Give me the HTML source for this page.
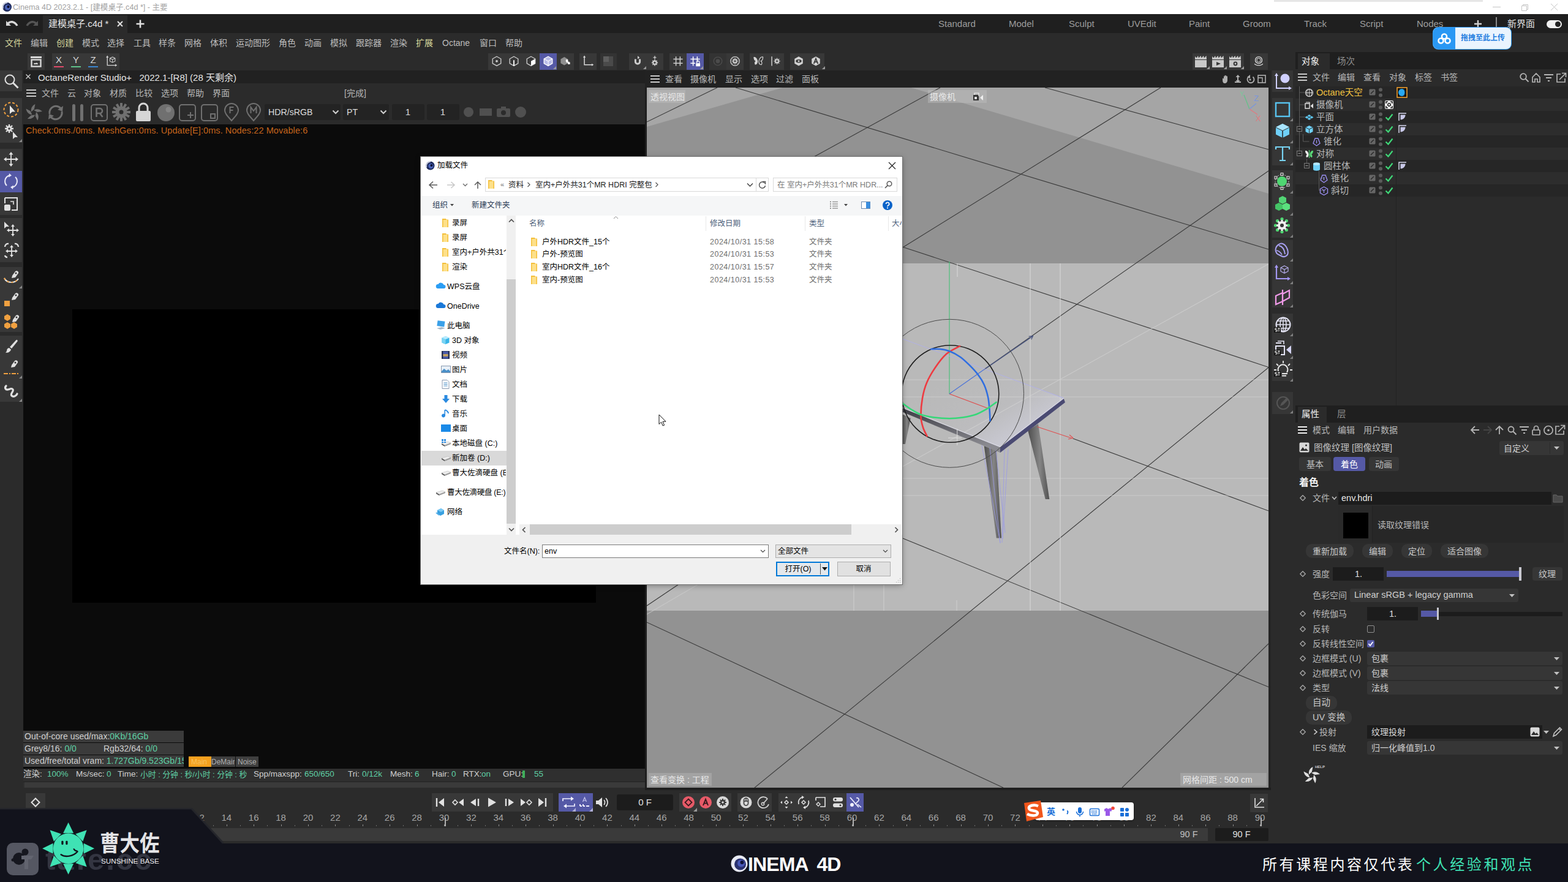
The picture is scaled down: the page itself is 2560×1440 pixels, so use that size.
<!DOCTYPE html>
<html><head><meta charset="utf-8"><title>Cinema 4D</title><style>
html,body{margin:0;padding:0;background:#2b2b2b;}
body{width:2560px;height:1440px;overflow:hidden;position:relative;font-family:"Liberation Sans","Noto Sans CJK SC",sans-serif;}
#r{position:absolute;left:0;top:0;width:2560px;height:1440px;overflow:hidden;}
#r div,#r>svg{position:absolute;box-sizing:border-box;}
.t{white-space:pre;}
</style></head><body><div id="r"><div style="left:0px;top:0px;width:2560px;height:23px;background:#ffffff;"></div>
<svg style="left:3px;top:3px;" width="17" height="17" viewBox="0 0 17 17"><circle cx="8.5" cy="8.5" r="7.5" fill="#1d2a5c"/><circle cx="9.5" cy="9" r="4.5" fill="#4a63b8"/><circle cx="10.5" cy="8" r="2.2" fill="#0c1030"/><path d="M2 11 A7.5 7.5 0 0 1 9 1.2" stroke="#c8cde0" stroke-width="2" fill="none"/></svg>
<div class="t" style="left:21px;top:3.5px;font-size:12.6px;line-height:16px;color:#a2a2a2;">Cinema 4D 2023.2.1 - [建模桌子.c4d *] - 主要</div>
<div style="left:2080px;top:0px;width:341px;height:3px;background:#e6e6e6;"></div>
<svg style="left:2436px;top:4px;" width="110" height="16" viewBox="0 0 110 16"><path d="M1 7.5h13" stroke="#c4c4c4" stroke-width="1"/><path d="M48.5 5.5h8v8h-8z M50.5 5.5v-2h8v8h-2" stroke="#c4c4c4" fill="none"/><path d="M96 2l11 11M107 2l-11 11" stroke="#c4c4c4" stroke-width="1"/></svg>
<div style="left:0px;top:23px;width:2560px;height:31px;background:#1f1f1f;"></div>
<div style="left:70px;top:25px;width:138px;height:29px;background:#2b2b2b;"></div>
<svg style="left:8px;top:30px;" width="56" height="18" viewBox="0 0 56 18"><path d="M2 12 L2 4 L4.5 6.5 C9 2.5 17 3 21.5 11.5 L18.5 12.5 C15 7 10 6.5 7 9 L10 12 Z" fill="#d8d8d8"/><path d="M54 12 L54 4 L51.5 6.5 C47 2.5 39 3 34.5 11.5 L37.5 12.5 C41 7 46 6.5 49 9 L46 12 Z" fill="#555"/></svg>
<div class="t" style="left:79px;top:29.0px;font-size:15px;line-height:20px;color:#e6e6e6;">建模桌子.c4d *</div>
<svg style="left:190px;top:33px;" width="12" height="12" viewBox="0 0 12 12"><path d="M2 2l8 8M10 2l-8 8" stroke="#e0e0e0" stroke-width="2"/></svg>
<svg style="left:221px;top:31px;" width="16" height="16" viewBox="0 0 16 16"><path d="M8 1.5v13M1.5 8h13" stroke="#e0e0e0" stroke-width="2.6"/></svg>
<div class="t" style="left:1532px;top:29.0px;font-size:15px;line-height:20px;color:#9c9c9c;">Standard</div>
<div class="t" style="left:1647px;top:29.0px;font-size:15px;line-height:20px;color:#9c9c9c;">Model</div>
<div class="t" style="left:1745px;top:29.0px;font-size:15px;line-height:20px;color:#9c9c9c;">Sculpt</div>
<div class="t" style="left:1841px;top:29.0px;font-size:15px;line-height:20px;color:#9c9c9c;">UVEdit</div>
<div class="t" style="left:1941px;top:29.0px;font-size:15px;line-height:20px;color:#9c9c9c;">Paint</div>
<div class="t" style="left:2029px;top:29.0px;font-size:15px;line-height:20px;color:#9c9c9c;">Groom</div>
<div class="t" style="left:2129px;top:29.0px;font-size:15px;line-height:20px;color:#9c9c9c;">Track</div>
<div class="t" style="left:2220px;top:29.0px;font-size:15px;line-height:20px;color:#9c9c9c;">Script</div>
<div class="t" style="left:2313px;top:29.0px;font-size:15px;line-height:20px;color:#9c9c9c;">Nodes</div>
<svg style="left:2405px;top:31px;" width="16" height="16" viewBox="0 0 16 16"><path d="M8 2v12M2 8h12" stroke="#d0d0d0" stroke-width="2.4"/></svg>
<div style="left:2442px;top:28px;width:2px;height:20px;background:#8a8a8a;"></div>
<div class="t" style="left:2461px;top:29.0px;font-size:15px;line-height:20px;color:#e0e0e0;">新界面</div>
<div style="left:2525px;top:33px;width:25px;height:13px;background:#f0f0f0;border-radius:7px;"></div>
<div style="left:2539px;top:35px;width:9px;height:9px;background:#222;border-radius:5px;"></div>
<div style="left:0px;top:54px;width:2560px;height:31px;background:#2b2b2b;"></div>
<div class="t" style="left:8px;top:61.0px;font-size:14px;line-height:18px;color:#d6d79c;">文件</div>
<div class="t" style="left:50px;top:61.0px;font-size:14px;line-height:18px;color:#bdbdbd;">编辑</div>
<div class="t" style="left:92px;top:61.0px;font-size:14px;line-height:18px;color:#d6d79c;">创建</div>
<div class="t" style="left:134px;top:61.0px;font-size:14px;line-height:18px;color:#bdbdbd;">模式</div>
<div class="t" style="left:175px;top:61.0px;font-size:14px;line-height:18px;color:#bdbdbd;">选择</div>
<div class="t" style="left:218px;top:61.0px;font-size:14px;line-height:18px;color:#bdbdbd;">工具</div>
<div class="t" style="left:259px;top:61.0px;font-size:14px;line-height:18px;color:#bdbdbd;">样条</div>
<div class="t" style="left:301px;top:61.0px;font-size:14px;line-height:18px;color:#bdbdbd;">网格</div>
<div class="t" style="left:343px;top:61.0px;font-size:14px;line-height:18px;color:#bdbdbd;">体积</div>
<div class="t" style="left:385px;top:61.0px;font-size:14px;line-height:18px;color:#bdbdbd;">运动图形</div>
<div class="t" style="left:455px;top:61.0px;font-size:14px;line-height:18px;color:#bdbdbd;">角色</div>
<div class="t" style="left:497px;top:61.0px;font-size:14px;line-height:18px;color:#bdbdbd;">动画</div>
<div class="t" style="left:539px;top:61.0px;font-size:14px;line-height:18px;color:#bdbdbd;">模拟</div>
<div class="t" style="left:581px;top:61.0px;font-size:14px;line-height:18px;color:#bdbdbd;">跟踪器</div>
<div class="t" style="left:637px;top:61.0px;font-size:14px;line-height:18px;color:#bdbdbd;">渲染</div>
<div class="t" style="left:679px;top:61.0px;font-size:14px;line-height:18px;color:#d6d79c;">扩展</div>
<div class="t" style="left:722px;top:61.0px;font-size:14px;line-height:18px;color:#bdbdbd;">Octane</div>
<div class="t" style="left:783px;top:61.0px;font-size:14px;line-height:18px;color:#bdbdbd;">窗口</div>
<div class="t" style="left:825px;top:61.0px;font-size:14px;line-height:18px;color:#bdbdbd;">帮助</div>
<div style="left:2340px;top:45px;width:127px;height:35px;background:#eaf4fe;border-radius:8px;box-shadow:0 0 0 1px #2f9af5;"></div>
<div style="left:2340px;top:45px;width:36px;height:35px;background:#2a98f4;border-radius:8px 0 0 8px;"></div>
<svg style="left:2346px;top:52px;" width="24" height="22" viewBox="0 0 24 22"><circle cx="12" cy="7.5" r="4" fill="none" stroke="#fff" stroke-width="2.6"/><circle cx="6.5" cy="14.5" r="4" fill="none" stroke="#fff" stroke-width="2.6"/><circle cx="17.5" cy="14.5" r="4" fill="none" stroke="#fff" stroke-width="2.6"/></svg>
<div class="t" style="left:2385px;top:54.0px;font-size:12px;line-height:16px;color:#1f7de0;font-weight:bold;">拖拽至此上传</div>
<div style="left:0px;top:85px;width:2560px;height:30px;background:#2b2b2b;"></div>
<div style="left:45px;top:87px;width:28px;height:27px;background:#383838;"></div>
<svg style="left:49px;top:91px;" width="20" height="19" viewBox="0 0 20 19"><rect x="1" y="1" width="18" height="3" fill="#d8d8d8"/><rect x="2.5" y="6.5" width="15" height="11" fill="none" stroke="#d8d8d8" stroke-width="2.4"/><path d="M6 14c0-2 2-2.5 3-1.5 1-2 4-1 4 1.5z" fill="#d8d8d8"/></svg>
<div style="left:85px;top:87px;width:110px;height:27px;background:#383838;"></div>
<div class="t" style="left:96px;top:88.0px;font-size:15px;line-height:20px;color:#d8d8d8;transform:translateX(-50%);">X</div>
<div style="left:88px;top:108px;width:16px;height:2px;background:#e0496a;"></div>
<div class="t" style="left:124px;top:88.0px;font-size:15px;line-height:20px;color:#d8d8d8;transform:translateX(-50%);">Y</div>
<div style="left:116px;top:108px;width:16px;height:2px;background:#5fc18a;"></div>
<div class="t" style="left:152px;top:88.0px;font-size:15px;line-height:20px;color:#d8d8d8;transform:translateX(-50%);">Z</div>
<div style="left:144px;top:108px;width:16px;height:2px;background:#3a86d0;"></div>
<svg style="left:171px;top:89px;" width="22" height="22" viewBox="-2 -1.8 26 26"><path d="M3 2v17h17" stroke="#d0d0d0" stroke-width="1.6" fill="none"/><path d="M3 0l-2.5 4h5zM22 19l-4-2.5v5z" fill="#d0d0d0"/><path d="M13 3l5 2.5v5.5l-5 2.5-5-2.5v-5.5z M8 5.5l5 2.5 5-2.5M13 8v5.5" stroke="#d0d0d0" stroke-width="1.2" fill="none"/></svg>
<div style="left:797px;top:87px;width:140px;height:27px;background:#383838;"></div>
<div style="left:881px;top:87px;width:28px;height:27px;background:#5559a6;"></div>
<svg style="left:800px;top:89px;" width="22" height="22" viewBox="-2 -1.8 26 26"><path d="M11 2l8 4.5v9l-8 4.5-8-4.5v-9z" fill="none" stroke="#cdcdcd" stroke-width="1.6"/><circle cx="11" cy="11" r="2.2" fill="#cdcdcd"/></svg>
<svg style="left:828px;top:89px;" width="22" height="22" viewBox="-2 -1.8 26 26"><path d="M11 2l8 4.5v9l-8 4.5-8-4.5v-9z" fill="none" stroke="#cdcdcd" stroke-width="1.6"/><path d="M11 9v11" stroke="#fff" stroke-width="2.2"/></svg>
<svg style="left:856px;top:89px;" width="22" height="22" viewBox="-2 -1.8 26 26"><path d="M11 2l8 4.5v9l-8 4.5-8-4.5v-9z" fill="none" stroke="#cdcdcd" stroke-width="1.6"/><path d="M11 11l8-4.5v9l-8 4.5z" fill="#fff"/></svg>
<svg style="left:884px;top:89px;" width="22" height="22" viewBox="-2 -1.8 26 26"><path d="M11 2l8 4.5v9l-8 4.5-8-4.5v-9z" fill="#b9bce8" stroke="#fff" stroke-width="1.6"/><path d="M3 6.5l8 4.5 8-4.5M11 11v9" stroke="#fff" stroke-width="1.2" fill="none"/></svg>
<svg style="left:912px;top:89px;" width="22" height="22" viewBox="-2 -1.8 26 26"><path d="M9 3l7 4v8l-7 4-7-4v-8z" fill="#8f8f8f"/><path d="M13 9l3 0 0 3 3 0-3 5 0-3-3 0z" fill="#fff"/><rect x="12" y="8" width="4" height="4" fill="#fff"/><rect x="16" y="13" width="4" height="4" fill="#fff"/></svg>
<div style="left:946px;top:87px;width:28px;height:27px;background:#383838;"></div>
<div style="left:980px;top:87px;width:27px;height:27px;background:#333;"></div>
<svg style="left:949px;top:89px;" width="22" height="22" viewBox="-2 -1.8 26 26"><path d="M4 2v16h16" stroke="#d8d8d8" stroke-width="1.8" fill="none"/><path d="M4 0l-2.5 4h5zM22 18l-4-2.5v5z" fill="#d8d8d8"/></svg>
<svg style="left:983px;top:90px;" width="20" height="20" viewBox="0 0 20 20"><rect x="2" y="2" width="16" height="16" fill="#4a4a4a"/><rect x="2" y="2" width="9" height="9" fill="#5e5e5e"/></svg>
<div style="left:1027px;top:87px;width:56px;height:27px;background:#383838;"></div>
<svg style="left:1030px;top:89px;" width="22" height="22" viewBox="-2 -1.8 26 26"><path d="M5 7v5a6 6 0 0 0 12 0V7h-3.5v5a2.5 2.5 0 0 1-5 0V7z" fill="#cdcdcd"/><path d="M11 1l4 3-4 3z" fill="#cdcdcd"/></svg>
<svg style="left:1058px;top:89px;" width="22" height="22" viewBox="-2 -1.8 26 26"><circle cx="11" cy="14" r="3.2" fill="none" stroke="#cdcdcd" stroke-width="2.6"/><path d="M11 8v2M11 18v2M5 14h2M15 14h2M6.8 9.8l1.4 1.4M13.8 16.8l1.4 1.4M15.2 9.8l-1.4 1.4M8.2 16.8l-1.4 1.4" stroke="#cdcdcd" stroke-width="2"/><path d="M8 4h6M11 1v6" stroke="#cdcdcd" stroke-width="1.6"/></svg>
<div style="left:1093px;top:87px;width:56px;height:27px;background:#383838;"></div>
<div style="left:1121px;top:87px;width:28px;height:27px;background:#5559a6;"></div>
<svg style="left:1096px;top:89px;" width="22" height="22" viewBox="-2 -1.8 26 26"><path d="M7 2v18M15 2v18M2 7h18M2 15h18" stroke="#cdcdcd" stroke-width="1.8"/></svg>
<svg style="left:1124px;top:89px;" width="22" height="22" viewBox="-2 -1.8 26 26"><path d="M7 2v18M15 2v11M2 7h18M2 15h9" stroke="#fff" stroke-width="1.8"/><rect x="12.5" y="15" width="8" height="6" fill="#fff"/><path d="M14 15v-2a2.5 2.5 0 0 1 5 0v2" stroke="#fff" stroke-width="1.4" fill="none"/></svg>
<div style="left:1158px;top:87px;width:28px;height:27px;background:#333;"></div>
<div style="left:1186px;top:87px;width:28px;height:27px;background:#383838;"></div>
<svg style="left:1161px;top:89px;" width="22" height="22" viewBox="-2 -1.8 26 26"><circle cx="11" cy="11" r="8" fill="none" stroke="#4c4c4c" stroke-width="1.6"/><circle cx="11" cy="11" r="4" fill="#4c4c4c"/></svg>
<svg style="left:1189px;top:89px;" width="22" height="22" viewBox="-2 -1.8 26 26"><circle cx="11" cy="11" r="8.5" fill="none" stroke="#cdcdcd" stroke-width="1.6"/><circle cx="11" cy="11" r="3" fill="none" stroke="#cdcdcd" stroke-width="2.4"/><path d="M11 5v2M11 15v2M5 11h2M15 11h2M6.8 6.8l1.4 1.4M13.8 13.8l1.4 1.4M15.2 6.8l-1.4 1.4M8.2 13.8l-1.4 1.4" stroke="#cdcdcd" stroke-width="1.8"/></svg>
<div style="left:1224px;top:87px;width:56px;height:27px;background:#383838;"></div>
<svg style="left:1227px;top:89px;" width="22" height="22" viewBox="-2 -1.8 26 26"><path d="M10 11C9 5 5 2 2 3c0 4 1 7 4 8-2 1-3 4-1 7 3 0 5-3 5-7z" fill="#d4d4d4"/><path d="M12 11c1-6 5-9 8-8 0 4-1 7-4 8 2 1 3 4 1 7-3 0-5-3-5-7z" fill="none" stroke="#d4d4d4" stroke-width="1.4"/></svg>
<svg style="left:1255px;top:89px;" width="22" height="22" viewBox="-2 -1.8 26 26"><path d="M4 2v18" stroke="#cdcdcd" stroke-width="1.8"/><circle cx="14" cy="11" r="3" fill="none" stroke="#cdcdcd" stroke-width="2.4"/><path d="M14 5v2M14 15v2M8 11h2M18 11h2M9.8 6.8l1.4 1.4M16.8 13.8l1.4 1.4M18.2 6.8l-1.4 1.4M11.2 13.8l-1.4 1.4" stroke="#cdcdcd" stroke-width="1.8"/></svg>
<div style="left:1290px;top:87px;width:56px;height:27px;background:#383838;"></div>
<svg style="left:1293px;top:89px;" width="22" height="22" viewBox="-2 -1.8 26 26"><path d="M11 2l8 4.5v9l-8 4.5-8-4.5v-9z" fill="#d2d2d2"/><ellipse cx="11" cy="11" rx="5.5" ry="3.2" fill="#383838"/><circle cx="11" cy="11" r="1.8" fill="#d2d2d2"/></svg>
<svg style="left:1321px;top:89px;" width="22" height="22" viewBox="-2 -1.8 26 26"><path d="M11 2l8 4.5v9l-8 4.5-8-4.5v-9z" fill="#d2d2d2"/><path d="M7 16l4-10 4 10M8.5 12.5h5" stroke="#383838" stroke-width="2" fill="none"/></svg>
<svg style="left:903px;top:108px;" width="5" height="5" viewBox="0 0 5 5"><path d="M5 0v5H0z" fill="#9a9a9a"/></svg>
<svg style="left:1050px;top:108px;" width="5" height="5" viewBox="0 0 5 5"><path d="M5 0v5H0z" fill="#9a9a9a"/></svg>
<svg style="left:1143px;top:108px;" width="5" height="5" viewBox="0 0 5 5"><path d="M5 0v5H0z" fill="#9a9a9a"/></svg>
<svg style="left:1342px;top:108px;" width="5" height="5" viewBox="0 0 5 5"><path d="M5 0v5H0z" fill="#9a9a9a"/></svg>
<div style="left:1947px;top:87px;width:84px;height:27px;background:#383838;"></div>
<div style="left:2041px;top:87px;width:29px;height:27px;background:#383838;"></div>
<svg style="left:1950px;top:90px;" width="22" height="22" viewBox="0 0 22 22"><path d="M1 8h19v12H1z" fill="#c8c8c8"/><path d="M1 7V2l2.500 2.500L6 1l1 3.500L10.500 1l1 3.500L15 1l1 3.500L19.500 1l.500 6z" fill="#c8c8c8"/></svg>
<svg style="left:1978px;top:90px;" width="22" height="22" viewBox="0 0 22 22"><path d="M1 8h19v12H1z" fill="#c8c8c8"/><path d="M1 7V2l2.500 2.500L6 1l1 3.500L10.500 1l1 3.500L15 1l1 3.500L19.500 1l.500 6z" fill="#c8c8c8"/><path d="M8 11l7 3-7 3z" fill="#383838"/></svg>
<svg style="left:2006px;top:90px;" width="22" height="22" viewBox="0 0 22 22"><path d="M1 8h19v12H1z" fill="#c8c8c8"/><path d="M1 7V2l2.500 2.500L6 1l1 3.500L10.500 1l1 3.500L15 1l1 3.500L19.500 1l.500 6z" fill="#c8c8c8"/><circle cx="11" cy="14" r="2.400" fill="none" stroke="#383838" stroke-width="2"/></svg>
<svg style="left:1970px;top:108px;" width="5" height="5" viewBox="0 0 5 5"><path d="M5 0v5H0z" fill="#9a9a9a"/></svg>
<svg style="left:1998px;top:108px;" width="5" height="5" viewBox="0 0 5 5"><path d="M5 0v5H0z" fill="#9a9a9a"/></svg>
<svg style="left:2026px;top:108px;" width="5" height="5" viewBox="0 0 5 5"><path d="M5 0v5H0z" fill="#9a9a9a"/></svg>
<svg style="left:2044px;top:89px;" width="22" height="22" viewBox="-2 -1.8 26 26"><circle cx="11" cy="9" r="6.5" fill="none" stroke="#d8d8d8" stroke-width="1.6"/><circle cx="11" cy="9" r="3.6" fill="none" stroke="#d8d8d8" stroke-width="1.2"/><path d="M3 16c3 4 13 4 16 0" fill="none" stroke="#d8d8d8" stroke-width="1.6"/></svg>
<div style="left:0px;top:115px;width:37px;height:1205px;background:#2b2b2b;"></div>
<div style="left:0px;top:115px;width:36px;height:34px;background:#383838;"></div>
<svg style="left:6px;top:120px;" width="26" height="26" viewBox="0 0 26 26"><circle cx="10" cy="10" r="7.5" fill="none" stroke="#e0e0e0" stroke-width="2"/><path d="M15.5 15.5l8 8" stroke="#e0e0e0" stroke-width="3"/></svg>
<div style="left:0px;top:160px;width:36px;height:73px;background:#383838;"></div>
<svg style="left:4px;top:165px;" width="30" height="30" viewBox="0 0 30 30"><circle cx="14" cy="14" r="11.5" fill="none" stroke="#f0a040" stroke-width="2" stroke-dasharray="4 3"/><path d="M12 7v14l4-3.5 5 0z" fill="#e8e8e8"/></svg>
<svg style="left:6px;top:201px;" width="26" height="30" viewBox="0 0 26 30"><circle cx="9" cy="9" r="3.2" fill="none" stroke="#e0e0e0" stroke-width="2.8"/><path d="M9 2v3M9 13v3M2 9h3M13 9h3M4 4l2 2M12 12l2 2M14 4l-2 2M6 12l-2 2" stroke="#e0e0e0" stroke-width="2.4"/><path d="M15 14v12l3.5-3 4.5 0z" fill="#e0e0e0"/></svg>
<div style="left:0px;top:243px;width:36px;height:108px;background:#383838;"></div>
<div style="left:0px;top:279px;width:36px;height:35px;background:#5559a6;"></div>
<svg style="left:6px;top:248px;" width="24" height="24" viewBox="0 0 24 24"><path d="M12 1v22M1 12h22" stroke="#e0e0e0" stroke-width="1.8"/><path d="M12 0l-3.5 4.5h7zM12 24l-3.5-4.5h7zM0 12l4.5-3.5v7zM24 12l-4.5-3.5v7z" fill="#e0e0e0"/></svg>
<svg style="left:5px;top:283px;" width="26" height="26" viewBox="0 0 26 26"><path d="M6 20A10 10 0 0 1 10 3.5" fill="none" stroke="#e8e8f8" stroke-width="2"/><path d="M20 6A10 10 0 0 1 16 22.5" fill="none" stroke="#e8e8f8" stroke-width="2"/><path d="M10 0l4 3.5-5 3zM16 26l-4-3.5 5-3z" fill="#e8e8f8"/></svg>
<svg style="left:6px;top:321px;" width="24" height="24" viewBox="0 0 24 24"><path d="M2 2h20v20h-9" fill="none" stroke="#e0e0e0" stroke-width="2"/><path d="M2 2v9" stroke="#e0e0e0" stroke-width="2"/><rect x="1" y="13" width="10" height="10" rx="2" fill="#e0e0e0"/><path d="M11 8h5v5" fill="none" stroke="#e0e0e0" stroke-width="1.6"/></svg>
<div style="left:0px;top:356px;width:36px;height:72px;background:#383838;"></div>
<svg style="left:5px;top:360px;" width="27" height="27" viewBox="0 0 27 27"><path d="M2 2v11l3.5-3 4.5 0z" fill="#e0e0e0"/><path d="M16 8v16M8 16h16" stroke="#e0e0e0" stroke-width="1.8"/><path d="M16 6l-3 4h6zM16 26l-3-4h6zM6 16l4-3v6zM26 16l-4-3v6z" fill="#e0e0e0"/></svg>
<svg style="left:5px;top:395px;" width="27" height="27" viewBox="0 0 27 27"><path d="M14 8v14M7 15h14" stroke="#e0e0e0" stroke-width="1.8"/><path d="M14 5l-3 4h6zM14 25l-3-4h6zM4 15l4-3v6zM24 15l-4-3v6z" fill="#e0e0e0"/><path d="M3 8a5 5 0 0 1 6-5M25 8a5 5 0 0 0-6-5M3 22a4 4 0 0 0 4 3" fill="none" stroke="#e0e0e0" stroke-width="2.4"/></svg>
<div style="left:0px;top:436px;width:36px;height:106px;background:#383838;"></div>
<svg style="left:5px;top:438px;" width="28" height="30" viewBox="0 0 28 30"><path d="M15 12l5-7c2-2 6 0 5 3l-5 7-6 1z" fill="#e0e0e0"/><circle cx="21" cy="8" r="1.5" fill="#383838"/><path d="M2 16c4 9 18 9 23 1" fill="none" stroke="#e8e8e8" stroke-width="2"/><path d="M2 16c4 9 18 9 23 1" fill="none" stroke="#f0a040" stroke-width="2" stroke-dasharray="3 4"/></svg>
<svg style="left:5px;top:474px;" width="28" height="30" viewBox="0 0 28 30"><path d="M15 12l5-7c2-2 6 0 5 3l-5 7-6 1z" fill="#e0e0e0"/><circle cx="21" cy="8" r="1.5" fill="#383838"/><rect x="2" y="17" width="9" height="9" fill="#f0a040"/></svg>
<svg style="left:5px;top:510px;" width="28" height="30" viewBox="0 0 28 30"><path d="M16 12l5-7c2-2 6 0 5 3l-5 7-6 1z" fill="#e0e0e0"/><circle cx="22" cy="8" r="1.5" fill="#383838"/><path d="M7 3l5 3v5l-5 3-5-3v-5zM7 16l5 3v5l-5 3-5-3v-5zM18 16l5 3v5l-5 3-5-3v-5z" fill="#f0a040"/></svg>
<div style="left:0px;top:548px;width:36px;height:108px;background:#383838;"></div>
<svg style="left:6px;top:553px;" width="24" height="26" viewBox="0 0 24 26"><path d="M22 2c1 1 1 2 0 3l-9 11-3-2.5 10-11c1-1 1.500-1 2-.5z" fill="#e0e0e0"/><path d="M9 15l3 2.500c-1 4-5 6-9 5 2-1 2-3 2.500-5 .5-1.500 2-2.500 3.500-2.500z" fill="#e0e0e0"/></svg>
<svg style="left:5px;top:583px;" width="28" height="32" viewBox="0 0 28 32"><path d="M14 13l5-7c2-2 6 0 5 3l-5 7-6 1z" fill="#e0e0e0"/><circle cx="20" cy="9" r="1.5" fill="#383838"/><path d="M1 27h24" stroke="#f0a040" stroke-width="2" stroke-dasharray="7 2 2 2"/></svg>
<svg style="left:5px;top:624px;" width="28" height="28" viewBox="0 0 28 28"><path d="M5 6c-3 3-1 7 3 6s6-3 8 0-5 7-2 10 8 0 9-3" fill="none" stroke="#e0e0e0" stroke-width="3.2" stroke-linecap="round"/></svg>
<svg style="left:30px;top:226px;" width="6" height="6" viewBox="0 0 6 6"><path d="M6 1v5H1z" fill="#8a8a8a"/></svg>
<svg style="left:30px;top:465px;" width="6" height="6" viewBox="0 0 6 6"><path d="M6 1v5H1z" fill="#8a8a8a"/></svg>
<svg style="left:30px;top:612px;" width="6" height="6" viewBox="0 0 6 6"><path d="M6 1v5H1z" fill="#8a8a8a"/></svg>
<svg style="left:30px;top:650px;" width="6" height="6" viewBox="0 0 6 6"><path d="M6 1v5H1z" fill="#8a8a8a"/></svg>
<div style="left:38px;top:115px;width:1015px;height:21px;background:#212121;"></div>
<svg style="left:41px;top:120px;" width="10" height="10" viewBox="0 0 10 10"><path d="M1.500 1.500l7 7M8.500 1.500l-7 7" stroke="#d0d0d0" stroke-width="1.400"/></svg>
<div class="t" style="left:62px;top:117.0px;font-size:15px;line-height:20px;color:#e4e4e4;">OctaneRender Studio+   2022.1-[R8] (28 天剩余)</div>
<div style="left:38px;top:136px;width:1015px;height:67px;background:#2b2b2b;"></div>
<svg style="left:43px;top:145px;" width="16" height="14" viewBox="0 0 16 14"><path d="M0 2h16M0 7h16M0 12h16" stroke="#c8c8c8" stroke-width="2"/></svg>
<div class="t" style="left:68px;top:143.0px;font-size:14px;line-height:18px;color:#b8b8b8;">文件</div>
<div class="t" style="left:110px;top:143.0px;font-size:14px;line-height:18px;color:#b8b8b8;">云</div>
<div class="t" style="left:137px;top:143.0px;font-size:14px;line-height:18px;color:#b8b8b8;">对象</div>
<div class="t" style="left:179px;top:143.0px;font-size:14px;line-height:18px;color:#b8b8b8;">材质</div>
<div class="t" style="left:221px;top:143.0px;font-size:14px;line-height:18px;color:#b8b8b8;">比较</div>
<div class="t" style="left:263px;top:143.0px;font-size:14px;line-height:18px;color:#b8b8b8;">选项</div>
<div class="t" style="left:305px;top:143.0px;font-size:14px;line-height:18px;color:#b8b8b8;">帮助</div>
<div class="t" style="left:347px;top:143.0px;font-size:14px;line-height:18px;color:#b8b8b8;">界面</div>
<div class="t" style="left:562px;top:143.0px;font-size:14px;line-height:18px;color:#b8b8b8;">[完成]</div>
<svg style="left:40px;top:169px;" width="30" height="30" viewBox="0 0 30 30"><g transform="translate(15 15)"><path d="M0 -4 C5 -7 10 -6 14 -2 L6 -1 Z" fill="#707070" transform="rotate(0)"/><path d="M0 -4 C5 -7 10 -6 14 -2 L6 -1 Z" fill="#707070" transform="rotate(72)"/><path d="M0 -4 C5 -7 10 -6 14 -2 L6 -1 Z" fill="#707070" transform="rotate(144)"/><path d="M0 -4 C5 -7 10 -6 14 -2 L6 -1 Z" fill="#707070" transform="rotate(216)"/><path d="M0 -4 C5 -7 10 -6 14 -2 L6 -1 Z" fill="#707070" transform="rotate(288)"/><circle r="3.500" fill="#2b2b2b"/></g></svg>
<svg style="left:76px;top:169px;" width="30" height="30" viewBox="0 0 30 30"><path d="M5 17A10.500 10.500 0 0 1 24 9" fill="none" stroke="#707070" stroke-width="3"/><path d="M25 13A10.500 10.500 0 0 1 6 21" fill="none" stroke="#707070" stroke-width="3"/><path d="M27 4l-1 9-8-3zM3 26l1-9 8 3z" fill="#707070"/></svg>
<svg style="left:112px;top:169px;" width="30" height="30" viewBox="0 0 30 30"><rect x="6" y="1" width="5" height="28" rx="2.500" fill="#707070"/><rect x="19" y="1" width="5" height="28" rx="2.500" fill="#707070"/></svg>
<svg style="left:147px;top:169px;" width="30" height="30" viewBox="0 0 30 30"><rect x="2" y="2" width="26" height="26" rx="4" fill="none" stroke="#707070" stroke-width="2"/><path d="M10.500 22V8h5.500a4 4 0 0 1 0 8h-5.500M16 16l4.500 6" fill="none" stroke="#707070" stroke-width="2.600"/></svg>
<svg style="left:183px;top:168px;" width="30" height="30" viewBox="0 0 30 30"><g transform="translate(15 15)"><rect x="-2" y="-15" width="4" height="7" fill="#707070" transform="rotate(0)"/><rect x="-2" y="-15" width="4" height="7" fill="#707070" transform="rotate(30)"/><rect x="-2" y="-15" width="4" height="7" fill="#707070" transform="rotate(60)"/><rect x="-2" y="-15" width="4" height="7" fill="#707070" transform="rotate(90)"/><rect x="-2" y="-15" width="4" height="7" fill="#707070" transform="rotate(120)"/><rect x="-2" y="-15" width="4" height="7" fill="#707070" transform="rotate(150)"/><rect x="-2" y="-15" width="4" height="7" fill="#707070" transform="rotate(180)"/><rect x="-2" y="-15" width="4" height="7" fill="#707070" transform="rotate(210)"/><rect x="-2" y="-15" width="4" height="7" fill="#707070" transform="rotate(240)"/><rect x="-2" y="-15" width="4" height="7" fill="#707070" transform="rotate(270)"/><rect x="-2" y="-15" width="4" height="7" fill="#707070" transform="rotate(300)"/><rect x="-2" y="-15" width="4" height="7" fill="#707070" transform="rotate(330)"/><circle r="9.500" fill="#707070"/><circle r="3.500" fill="#2b2b2b"/></g></svg>
<svg style="left:220px;top:167px;" width="28" height="32" viewBox="0 0 28 32"><path d="M7 14V9a7 7 0 0 1 14 0v5" fill="none" stroke="#d6d6d6" stroke-width="3"/><rect x="2" y="14" width="24" height="17" rx="2" fill="#d6d6d6"/></svg>
<svg style="left:256px;top:169px;" width="30" height="30" viewBox="0 0 30 30"><circle cx="15" cy="15" r="14" fill="#707070"/><circle cx="19" cy="10" r="4.500" fill="#858585"/></svg>
<svg style="left:291px;top:169px;" width="30" height="30" viewBox="0 0 30 30"><rect x="2" y="2" width="26" height="26" rx="4" fill="none" stroke="#707070" stroke-width="2"/><path d="M20 14v10M15 19h10" stroke="#707070" stroke-width="2"/></svg>
<svg style="left:327px;top:169px;" width="30" height="30" viewBox="0 0 30 30"><rect x="2" y="2" width="26" height="26" rx="4" fill="none" stroke="#707070" stroke-width="2"/><rect x="17" y="17" width="7" height="7" fill="none" stroke="#707070" stroke-width="2"/></svg>
<svg style="left:363px;top:168px;" width="30" height="32" viewBox="0 0 30 32"><path d="M15 29C8 21 4 17 4 12a11 11 0 0 1 22 0c0 5-4 9-11 17z" fill="none" stroke="#707070" stroke-width="2"/><path d="M12.500 17V7h6M12.500 12h5" stroke="#707070" stroke-width="2" fill="none"/></svg>
<svg style="left:399px;top:168px;" width="30" height="32" viewBox="0 0 30 32"><path d="M15 29C8 21 4 17 4 12a11 11 0 0 1 22 0c0 5-4 9-11 17z" fill="none" stroke="#707070" stroke-width="2"/><path d="M10.500 17V7l4.500 6 4.500-6v10" stroke="#707070" stroke-width="2" fill="none"/></svg>
<div style="left:432px;top:170px;width:124px;height:26px;background:#232323;border-radius:3px;"></div>
<div class="t" style="left:438px;top:174.0px;font-size:14.2px;line-height:18px;color:#dcdcdc;">HDR/sRGB</div>
<svg style="left:542px;top:179px;" width="12" height="8" viewBox="0 0 12 8"><path d="M1.500 1.500l4.500 4.500 4.500-4.500" fill="none" stroke="#d0d0d0" stroke-width="2"/></svg>
<div style="left:560px;top:170px;width:75px;height:26px;background:#232323;border-radius:3px;"></div>
<div class="t" style="left:566px;top:174.0px;font-size:14.2px;line-height:18px;color:#dcdcdc;">PT</div>
<svg style="left:620px;top:179px;" width="12" height="8" viewBox="0 0 12 8"><path d="M1.500 1.500l4.500 4.500 4.500-4.500" fill="none" stroke="#d0d0d0" stroke-width="2"/></svg>
<div style="left:640px;top:170px;width:53px;height:26px;background:#232323;border-radius:3px;"></div>
<div class="t" style="left:666px;top:173.0px;font-size:15px;line-height:20px;color:#dcdcdc;transform:translateX(-50%);">1</div>
<div style="left:697px;top:170px;width:53px;height:26px;background:#232323;border-radius:3px;"></div>
<div class="t" style="left:723px;top:173.0px;font-size:15px;line-height:20px;color:#dcdcdc;transform:translateX(-50%);">1</div>
<svg style="left:755px;top:173px;" width="20" height="20" viewBox="0 0 20 20"><circle cx="10" cy="10" r="8" fill="#505050"/></svg>
<svg style="left:782px;top:175px;" width="22" height="16" viewBox="0 0 22 16"><rect x="1" y="2" width="20" height="12" fill="#505050"/></svg>
<svg style="left:810px;top:174px;" width="24" height="18" viewBox="0 0 24 18"><rect x="1" y="3" width="22" height="14" rx="2" fill="#505050"/><rect x="8" y="0" width="8" height="4" fill="#505050"/><circle cx="12" cy="10" r="4" fill="#2b2b2b"/></svg>
<svg style="left:840px;top:173px;" width="20" height="20" viewBox="0 0 20 20"><circle cx="10" cy="10" r="9" fill="#505050"/></svg>
<div style="left:38px;top:203px;width:1015px;height:1052px;background:#0b0b0b;"></div>
<div class="t" style="left:42px;top:203.5px;font-size:14.5px;line-height:19px;color:#c4641c;letter-spacing:0.08px;">Check:0ms./0ms. MeshGen:0ms. Update[E]:0ms. Nodes:22 Movable:6</div>
<div style="left:118px;top:505px;width:855px;height:479px;background:#000000;"></div>
<div style="left:38px;top:1193px;width:262px;height:19px;background:#3b3b3b;"></div>
<div style="left:38px;top:1213px;width:262px;height:19px;background:#3b3b3b;"></div>
<div style="left:38px;top:1233px;width:262px;height:19px;background:#3b3b3b;"></div>
<div class="t" style="left:40px;top:1192px;font-size:14px;line-height:20px;color:#d0d0d0">Out-of-core used/max:<span style="color:#5ed0a4">0Kb/16Gb</span></div>
<div class="t" style="left:40px;top:1212px;font-size:14px;line-height:20px;color:#d0d0d0">Grey8/16: <span style="color:#5ed0a4">0/0</span></div>
<div class="t" style="left:169px;top:1212px;font-size:14px;line-height:20px;color:#d0d0d0">Rgb32/64: <span style="color:#5ed0a4">0/0</span></div>
<div class="t" style="left:40px;top:1232px;font-size:14px;line-height:20px;color:#d0d0d0;width:260px;overflow:hidden">Used/free/total vram: <span style="color:#5ed0a4">1.727Gb/9.523Gb/15</span></div>
<div style="left:308px;top:1235px;width:37px;height:17px;background:#f5a01e;"></div>
<div style="left:345px;top:1235px;width:39px;height:17px;background:#3f3f3f;"></div>
<div style="left:385px;top:1235px;width:37px;height:17px;background:#3f3f3f;"></div>
<div class="t" style="left:312px;top:1235.5px;font-size:12px;line-height:16px;color:#f8c060;">Main</div>
<div class="t" style="left:345px;top:1235.5px;font-size:12px;line-height:16px;color:#b0b0b0;width:38px;overflow:hidden;">DeMain</div>
<div class="t" style="left:388px;top:1235.5px;font-size:12px;line-height:16px;color:#b0b0b0;">Noise</div>
<div style="left:38px;top:1255px;width:1015px;height:31px;background:#2f2f2f;"></div>
<div style="left:38px;top:1276px;width:1015px;height:1px;background:#222;"></div>
<div style="left:40px;top:1277px;width:1013px;height:9px;background:#3a3a3a;"></div>
<div class="t" style="left:38px;top:1255.0px;font-size:13.5px;line-height:18px;color:#d0d0d0;">渲染:</div>
<div class="t" style="left:77px;top:1255.0px;font-size:13.5px;line-height:18px;color:#5ed0a4;">100%</div>
<div class="t" style="left:124px;top:1255.0px;font-size:13.5px;line-height:18px;color:#d0d0d0;">Ms/sec:</div>
<div class="t" style="left:174px;top:1255.0px;font-size:13.5px;line-height:18px;color:#5ed0a4;">0</div>
<div class="t" style="left:192px;top:1255.0px;font-size:13.5px;line-height:18px;color:#d0d0d0;">Time:</div>
<div class="t" style="left:229px;top:1255.5px;font-size:12.8px;line-height:17px;color:#5ed0a4;">小时 : 分钟 : 秒/小时 : 分钟 : 秒</div>
<div class="t" style="left:414px;top:1255.0px;font-size:13.5px;line-height:18px;color:#d0d0d0;">Spp/maxspp:</div>
<div class="t" style="left:497px;top:1255.0px;font-size:13.5px;line-height:18px;color:#5ed0a4;">650/650</div>
<div class="t" style="left:568px;top:1255.0px;font-size:13.5px;line-height:18px;color:#d0d0d0;">Tri:</div>
<div class="t" style="left:591px;top:1255.0px;font-size:13.5px;line-height:18px;color:#5ed0a4;">0/12k</div>
<div class="t" style="left:637px;top:1255.0px;font-size:13.5px;line-height:18px;color:#d0d0d0;">Mesh:</div>
<div class="t" style="left:677px;top:1255.0px;font-size:13.5px;line-height:18px;color:#5ed0a4;">6</div>
<div class="t" style="left:705px;top:1255.0px;font-size:13.5px;line-height:18px;color:#d0d0d0;">Hair:</div>
<div class="t" style="left:737px;top:1255.0px;font-size:13.5px;line-height:18px;color:#5ed0a4;">0</div>
<div class="t" style="left:756px;top:1255.0px;font-size:13.5px;line-height:18px;color:#d0d0d0;">RTX:</div>
<div class="t" style="left:786px;top:1255.0px;font-size:13.5px;line-height:18px;color:#5ed0a4;">on</div>
<div class="t" style="left:821px;top:1255.0px;font-size:13.5px;line-height:18px;color:#d0d0d0;">GPU:</div>
<div class="t" style="left:872px;top:1255.0px;font-size:13.5px;line-height:18px;color:#5ed0a4;">55</div>
<div style="left:853px;top:1258px;width:4px;height:12px;background:#3fae5a;"></div>
<div style="left:1053px;top:115px;width:1020px;height:28px;background:#222222;"></div>
<svg style="left:1062px;top:122px;" width="15" height="14" viewBox="0 0 15 14"><path d="M0 2h15M0 7h15M0 12h15" stroke="#c8c8c8" stroke-width="2"/></svg>
<div class="t" style="left:1086px;top:120.0px;font-size:14px;line-height:18px;color:#b8b8b8;">查看</div>
<div class="t" style="left:1127px;top:120.0px;font-size:14px;line-height:18px;color:#b8b8b8;">摄像机</div>
<div class="t" style="left:1184px;top:120.0px;font-size:14px;line-height:18px;color:#b8b8b8;">显示</div>
<div class="t" style="left:1226px;top:120.0px;font-size:14px;line-height:18px;color:#b8b8b8;">选项</div>
<div class="t" style="left:1267px;top:120.0px;font-size:14px;line-height:18px;color:#b8b8b8;">过滤</div>
<div class="t" style="left:1309px;top:120.0px;font-size:14px;line-height:18px;color:#b8b8b8;">面板</div>
<svg style="left:1993px;top:121px;" width="76" height="16" viewBox="0 0 76 16"><path d="M3 9c0-3 1-3 2-1V4c0-1 1.500-1 1.500 0V2.500c0-1 1.500-1 1.500 0V3c0-1 1.500-1 1.500 0v1c0-1 1.500-1 1.500 0v6c0 3-2 5-4.500 5S3 13 3 9z" fill="#b0b0b0"/><path d="M28 1l-3.500 4h2.500v5h-2.500l3.500 4 3.500-4H29V5h2.500z" fill="#b0b0b0"/><path d="M23 12h10v2H23z" fill="#b0b0b0"/><path d="M52.500 4.500A5.500 5.500 0 1 1 45 5" fill="none" stroke="#b0b0b0" stroke-width="1.800"/><path d="M48 1v6l-5-2z" fill="#b0b0b0"/><circle cx="48" cy="9" r="1.500" fill="#b0b0b0"/><rect x="61" y="2" width="12" height="12" fill="none" stroke="#b0b0b0" stroke-width="1.600"/><path d="M61 6h7v8" fill="none" stroke="#b0b0b0" stroke-width="1.400"/></svg>
<svg style="left:1056px;top:143px;" width="1015" height="1143" viewBox="0 0 1015 1143"><rect x="0" y="0" width="1015" height="287" fill="#929292"/><rect x="0" y="287" width="1015" height="567" fill="#b9b9b9"/><rect x="0" y="854" width="1015" height="289" fill="#929292"/><polygon points="0,0 222,0 0,64" fill="#a6a6a6" /><polygon points="431,0 1015,0 1015,173" fill="#a5a5a5" /><path d="M145 0L1015 264" stroke="#3a3a3a" stroke-width="1.1" opacity="1"/><path d="M650 0L1015 101" stroke="#3a3a3a" stroke-width="1.1" opacity="1"/><path d="M417 260L1015 456.5" stroke="#3a3a3a" stroke-width="1.1" opacity="1"/><path d="M696 573L1015 691" stroke="#3a3a3a" stroke-width="1.1" opacity="1"/><path d="M417 735.5L1015 978.5" stroke="#3a3a3a" stroke-width="1.1" opacity="1"/><path d="M0 873L582 1143" stroke="#3a3a3a" stroke-width="1.1" opacity="1"/><path d="M0 56L115 0" stroke="#3a3a3a" stroke-width="1.1" opacity="1"/><path d="M273 113L479 0" stroke="#3a3a3a" stroke-width="1.1" opacity="1"/><path d="M417 261.5L839 0" stroke="#3a3a3a" stroke-width="1.1" opacity="1"/><path d="M702 354L1015 136" stroke="#3a3a3a" stroke-width="1.1" opacity="1"/><path d="M1015 457L176 1143" stroke="#3a3a3a" stroke-width="1.1" opacity="1"/><path d="M1015 908L776 1143" stroke="#3a3a3a" stroke-width="1.1" opacity="1"/><path d="M0 846L52 811" stroke="#3a3a3a" stroke-width="1.1" opacity="1"/><path d="M550.7 460.3L702 354" stroke="#3a3a3a" stroke-width="1.1" opacity="1"/><defs><linearGradient id="tg" gradientUnits="userSpaceOnUse" x1="504" y1="467" x2="577" y2="591"><stop offset="0" stop-color="#b9b9b9"/><stop offset=".6" stop-color="#bcbcbe"/><stop offset="1" stop-color="#cacad4"/></linearGradient><linearGradient id="eg" x1="0" y1="0" x2="0.3" y2="1"><stop offset="0" stop-color="#3c3c44"/><stop offset="1" stop-color="#8a8a90"/></linearGradient><linearGradient id="lg" x1="0" x2="1"><stop offset="0" stop-color="#4e4e4e"/><stop offset=".55" stop-color="#858585"/><stop offset="1" stop-color="#505050"/></linearGradient></defs><polygon points="417,410 680.7,507 683,514 577,594 417,529" fill="url(#tg)" /><path d="M626 287L626 854" stroke="#dcdcdc" stroke-width="1.2" opacity="0.8"/><path d="M675 287L675 854" stroke="#dcdcdc" stroke-width="1.2" opacity="0.8"/><path d="M507 287L507 309" stroke="#dcdcdc" stroke-width="1.2" opacity="0.8"/><path d="M338 811L338 854" stroke="#d4d4d4" stroke-width="1.2" opacity="0.7"/><path d="M387 811L387 854" stroke="#d4d4d4" stroke-width="1.2" opacity="0.7"/><path d="M506 837L506 854" stroke="#d4d4d4" stroke-width="1.2" opacity="0.7"/><path d="M417 477L1015 477" stroke="#d6d6d6" stroke-width="1.2" opacity="0.7"/><path d="M417 505L1015 505" stroke="#d6d6d6" stroke-width="1.2" opacity="0.7"/><path d="M417 638L1015 638" stroke="#d6d6d6" stroke-width="1.2" opacity="0.7"/><path d="M417 666L1015 666" stroke="#d6d6d6" stroke-width="1.2" opacity="0.7"/><path d="M417 619L1015 288" stroke="#d4d4d4" stroke-width="1.2" opacity="0.65"/><path d="M0 860L84 811" stroke="#d0d0d0" stroke-width="1.2" opacity="0.6"/><path d="M494 284L494 500" stroke="#4cc07a" stroke-width="1.2" opacity="1"/><path d="M494 500L557.3 523.7" stroke="#e04848" stroke-width="1.2" opacity="1"/><path d="M494 500L550.7 460.3" stroke="#4a72d8" stroke-width="1.2" opacity="1"/><path d="M550.7 460.3L630.7 405.3" stroke="#4a5680" stroke-width="1.4" opacity="1"/><path d="M630.7 405.3l-7 1 M630.7 405.3l-3 6" stroke="#4a5680" stroke-width="1.200" fill="none"/><path d="M417 410L680.7 507" stroke="#b0b0ee" stroke-width="1.1" opacity="0.8"/><polygon points="550.7,585 571,593 579,735.5 570.7,735.5" fill="url(#lg)" /><polygon points="622.3,560.3 639,549 657.3,672 650.7,672" fill="url(#lg)" /><polygon points="417,533 430.7,540 422,582 417,582" fill="url(#lg)" /><polygon points="417,523 577,587 577,596 417,529.5" fill="url(#eg)" /><polygon points="577,587 680.7,507.5 683,514 577,596" fill="#4a4a72" /><path d="M417 522.5L577 586.5L681 507" stroke="#e4e4f0" stroke-width="1.2" fill="none" opacity=".75"/><path d="M547 584L577 743M584 591L580 743M590 590L581 737M560 588L577 744M570 592L585 727" stroke="#9a9ae8" stroke-width="1" fill="none" opacity=".8"/><path d="M492 572L514 572" stroke="#e0e0e0" stroke-width="1.2" opacity="0.8"/><path d="M506.7 557L506.7 584" stroke="#e0e0e0" stroke-width="1.2" opacity="0.8"/><circle cx="494.5" cy="499.3" r="121" fill="none" stroke="#4a4a4a" stroke-width="1"/><circle cx="495.5" cy="500" r="79.3" fill="none" stroke="#1c1c1c" stroke-width="1.600"/><path d="M511 422C507.3 424.2,495.7 429.2,489 435C482.3 440.8,476.3 449.2,471 457C465.7 464.8,460.5 473.7,457 482C453.5 490.3,451.6 497.8,450 507C448.4 516.2,447.3 529.0,447.5 537C447.7 545.0,449.3 549.7,451 555C452.7 560.3,456.4 566.7,457.5 569" fill="none" stroke="#ee3a40" stroke-width="2.6" stroke-linecap="round"/><path d="M464 427C466.5 427.0,474.0 426.5,479 427C484.0 427.5,488.5 428.1,494 430.3C499.5 432.5,506.5 436.1,512 440C517.5 443.9,522.5 448.9,527.3 453.7C532.1 458.5,537.1 463.8,541 469C544.9 474.2,548.0 479.0,550.7 485C553.4 491.0,555.5 498.3,557 505C558.5 511.7,558.9 518.5,559.5 525C560.1 531.5,560.3 540.8,560.5 544" fill="none" stroke="#2f6ee0" stroke-width="2.6" stroke-linecap="round"/><path d="M417 515C419.3 516.7,426.0 521.9,431 525C436.0 528.1,440.7 531.5,447 533.7C453.3 536.0,461.2 537.4,469 538.5C476.8 539.6,486.2 540.3,494 540.3C501.8 540.3,508.8 539.6,516 538.5C523.2 537.4,530.3 536.1,537 533.7C543.7 531.3,550.4 527.3,556 524C561.6 520.7,568.2 515.4,570.7 513.7" fill="none" stroke="#35d878" stroke-width="2.6" stroke-linecap="round"/><path d="M637.3 553.7L695.7 573" stroke="#e05050" stroke-width="1.1" opacity="1"/><path d="M696 572l-6 -5 M696 572l-8 2" stroke="#e05050" stroke-width="1.100" fill="none"/><g transform="translate(984 35)" stroke-width="1.400" fill="none"><path d="M0 0L-9 -23" stroke="#66c08a"/><path d="M0 0L11 -9" stroke="#7a96dc"/><path d="M0 0L13 9" stroke="#e07a80"/></g></svg>
<div class="t" style="left:2047px;top:151.5px;font-size:13px;line-height:17px;color:#7a96dc;">Z</div>
<div class="t" style="left:2050px;top:184.5px;font-size:13px;line-height:17px;color:#e07a80;">X</div>
<div class="t" style="left:2024px;top:146.5px;font-size:10px;line-height:13px;color:#7ac79a;">Y</div>
<div style="left:1059px;top:147px;width:60px;height:21px;background:rgba(190,190,190,.45);"></div>
<div class="t" style="left:1062px;top:148.5px;font-size:14px;line-height:18px;color:#e8e8e8;">透视视图</div>
<div style="left:1515px;top:147px;width:96px;height:21px;background:rgba(190,190,190,.45);"></div>
<div class="t" style="left:1518px;top:148.5px;font-size:14px;line-height:18px;color:#e8e8e8;">摄像机</div>
<svg style="left:1588px;top:151px;" width="18" height="14" viewBox="0 0 18 14"><rect x="1" y="4" width="9" height="9" fill="#333"/><path d="M3 4V1h7v5" fill="none" stroke="#eee" stroke-width="1.200"/><path d="M17 4l-5 4.500 5 4.500z" fill="#eee"/><rect x="3" y="7" width="4" height="4" fill="#ddd"/></svg>
<div style="left:1059px;top:1262px;width:103px;height:21px;background:rgba(190,190,190,.4);"></div>
<div class="t" style="left:1062px;top:1263.5px;font-size:14px;line-height:18px;color:#e8e8e8;">查看变换 : 工程</div>
<div style="left:1927px;top:1262px;width:141px;height:21px;background:rgba(190,190,190,.4);"></div>
<div class="t" style="left:1931px;top:1263.5px;font-size:14px;line-height:18px;color:#e8e8e8;">网格间距 : 500 cm</div>
<div style="left:1053px;top:143px;width:3px;height:1147px;background:#1e1e1e;"></div>
<div style="left:2071px;top:115px;width:4px;height:1175px;background:#242424;"></div>
<div style="left:1053px;top:1286px;width:1022px;height:4px;background:#1e1e1e;"></div>
<div style="left:2075px;top:115px;width:40px;height:1263px;background:#2b2b2b;"></div>
<div style="left:2077px;top:115px;width:34px;height:35px;background:#363636;"></div>
<div style="left:2077px;top:160px;width:34px;height:110px;background:#363636;"></div>
<div style="left:2077px;top:278px;width:34px;height:110px;background:#363636;"></div>
<div style="left:2077px;top:392px;width:34px;height:110px;background:#363636;"></div>
<div style="left:2077px;top:512px;width:34px;height:110px;background:#363636;"></div>
<div style="left:2077px;top:640px;width:34px;height:36px;background:#363636;"></div>
<svg style="left:2105px;top:192px;" width="6" height="6" viewBox="0 0 6 6"><path d="M6 1v5H1z" fill="#808080"/></svg>
<svg style="left:2105px;top:228px;" width="6" height="6" viewBox="0 0 6 6"><path d="M6 1v5H1z" fill="#808080"/></svg>
<svg style="left:2105px;top:264px;" width="6" height="6" viewBox="0 0 6 6"><path d="M6 1v5H1z" fill="#808080"/></svg>
<svg style="left:2105px;top:310px;" width="6" height="6" viewBox="0 0 6 6"><path d="M6 1v5H1z" fill="#808080"/></svg>
<svg style="left:2105px;top:346px;" width="6" height="6" viewBox="0 0 6 6"><path d="M6 1v5H1z" fill="#808080"/></svg>
<svg style="left:2105px;top:382px;" width="6" height="6" viewBox="0 0 6 6"><path d="M6 1v5H1z" fill="#808080"/></svg>
<svg style="left:2105px;top:421px;" width="6" height="6" viewBox="0 0 6 6"><path d="M6 1v5H1z" fill="#808080"/></svg>
<svg style="left:2105px;top:458px;" width="6" height="6" viewBox="0 0 6 6"><path d="M6 1v5H1z" fill="#808080"/></svg>
<svg style="left:2105px;top:496px;" width="6" height="6" viewBox="0 0 6 6"><path d="M6 1v5H1z" fill="#808080"/></svg>
<svg style="left:2105px;top:543px;" width="6" height="6" viewBox="0 0 6 6"><path d="M6 1v5H1z" fill="#808080"/></svg>
<svg style="left:2105px;top:580px;" width="6" height="6" viewBox="0 0 6 6"><path d="M6 1v5H1z" fill="#808080"/></svg>
<svg style="left:2105px;top:617px;" width="6" height="6" viewBox="0 0 6 6"><path d="M6 1v5H1z" fill="#808080"/></svg>
<svg style="left:2105px;top:669px;" width="6" height="6" viewBox="0 0 6 6"><path d="M6 1v5H1z" fill="#808080"/></svg>
<svg style="left:2080px;top:118px;" width="30" height="30" viewBox="0 0 30 30"><path d="M4 4v22h22" stroke="#cfd0ff" stroke-width="2" fill="none"/><path d="M4 1l-3 5h6zM29 26l-5-3v6z" fill="#cfd0ff"/><circle cx="18" cy="10" r="7.500" fill="#d0d0ff"/></svg>
<svg style="left:2080px;top:165px;" width="28" height="28" viewBox="0 0 28 28"><rect x="3" y="3" width="22" height="22" fill="none" stroke="#58c4f0" stroke-width="2.400"/></svg>
<svg style="left:2080px;top:200px;" width="28" height="28" viewBox="0 0 28 28"><path d="M14 2l11 5.500v12L14 25 3 19.500v-12z" fill="#6fd0f8"/><path d="M3 7.500l11 5.500 11-5.500M14 13v12" stroke="#2b2b2b" stroke-width="1.600" fill="none"/><path d="M14 2l11 5.500-11 5.500-11-5.500z" fill="#a8e4ff"/></svg>
<svg style="left:2080px;top:237px;" width="28" height="28" viewBox="0 0 28 28"><path d="M3 7V3h22v4M14 3v22M9 25h10" stroke="#78d4f4" stroke-width="2.200" fill="none"/></svg>
<svg style="left:2079px;top:282px;" width="28" height="28" viewBox="0 0 28 28"><circle cx="14" cy="14" r="11" fill="none" stroke="#d0d0d0" stroke-width="1" stroke-dasharray="2 2"/><circle cx="14" cy="14" r="8" fill="#4fd672"/><rect x="12" y="0.5" width="4" height="4" fill="none" stroke="#e8e8e8" stroke-width="1"/><rect x="12" y="23.5" width="4" height="4" fill="none" stroke="#e8e8e8" stroke-width="1"/><rect x="2" y="6" width="4" height="4" fill="none" stroke="#e8e8e8" stroke-width="1"/><rect x="22" y="6" width="4" height="4" fill="none" stroke="#e8e8e8" stroke-width="1"/><rect x="2" y="18" width="4" height="4" fill="none" stroke="#e8e8e8" stroke-width="1"/><rect x="22" y="18" width="4" height="4" fill="none" stroke="#e8e8e8" stroke-width="1"/></svg>
<svg style="left:2080px;top:319px;" width="28" height="28" viewBox="0 0 28 28"><path d="M14 1l6 3v7l-6 3-6-3V4z" fill="#52d474"/><path d="M8 12l6 3v7l-6 3-6-3v-7z" fill="#44c466"/><path d="M20 12l6 3v7l-6 3-6-3v-7z" fill="#5be07e"/></svg>
<svg style="left:2079px;top:354px;" width="28" height="28" viewBox="0 0 28 28"><circle cx="24.5" cy="14.0" r="2.600" fill="#4fd672"/><circle cx="21.4" cy="21.4" r="2.600" fill="#4fd672"/><circle cx="14.0" cy="24.5" r="2.600" fill="#4fd672"/><circle cx="6.6" cy="21.4" r="2.600" fill="#4fd672"/><circle cx="3.5" cy="14.0" r="2.600" fill="#4fd672"/><circle cx="6.6" cy="6.6" r="2.600" fill="#4fd672"/><circle cx="14.0" cy="3.5" r="2.600" fill="#4fd672"/><circle cx="21.4" cy="6.6" r="2.600" fill="#4fd672"/><circle cx="14" cy="14" r="5" fill="none" stroke="#f0f0f0" stroke-width="4"/><path d="M14 5v3M14 20v3M5 14h3M20 14h3M7.500 7.500l2 2M18.500 18.500l2 2M20.500 7.500l-2 2M9.500 18.500l-2 2" stroke="#f0f0f0" stroke-width="3"/></svg>
<svg style="left:2080px;top:395px;" width="28" height="28" viewBox="0 0 28 28"><path d="M8 4c4-3 9-1 12 4s4 11 1 14-7 2-9 1l-6-3c-3-2-4-7-3-10s3-5 5-6z" fill="none" stroke="#a8a0f0" stroke-width="2"/><path d="M8 6c5 1 9 6 10 14" fill="none" stroke="#a8a0f0" stroke-width="2"/><path d="M4 14c3 0 7 3 9 7" fill="none" stroke="#a8a0f0" stroke-width="1.600"/></svg>
<svg style="left:2080px;top:431px;" width="28" height="28" viewBox="0 0 28 28"><path d="M4 4v20h20" stroke="#a498f4" stroke-width="2.200" fill="none"/><path d="M4 1l-3 5h6zM27 24l-5-3v6z" fill="#a498f4"/><path d="M17 3l6 3v6l-6 3-6-3V6zM11 6l6 3 6-3M17 9v6" stroke="#b8b0f0" stroke-width="1.200" fill="none"/></svg>
<svg style="left:2080px;top:471px;" width="28" height="28" viewBox="0 0 28 28"><path d="M3 12l11-5v14l-11 5zM14 9l11-6v12l-11 6" fill="none" stroke="#f09ae8" stroke-width="2.200"/><path d="M14 2v25" stroke="#f09ae8" stroke-width="2.200"/></svg>
<svg style="left:2080px;top:516px;" width="30" height="30" viewBox="0 0 30 30"><circle cx="15" cy="14" r="11.500" fill="none" stroke="#e4e4f4" stroke-width="2"/><ellipse cx="15" cy="14" rx="5" ry="11.500" fill="none" stroke="#e4e4f4" stroke-width="1.600"/><path d="M3.500 14h23M15 2.500v23M5 8h20M5 20h20" stroke="#e4e4f4" stroke-width="1.400"/><rect x="0" y="18" width="11" height="9" fill="#111"/><path d="M5 20H2v2.500h3v2.500H2M6 20h4M8 20v5.500" stroke="#fff" stroke-width="1.100" fill="none"/></svg>
<svg style="left:2080px;top:553px;" width="30" height="30" viewBox="0 0 30 30"><path d="M3 7h9M3 12h14v14H3z" fill="none" stroke="#e4e4f4" stroke-width="2"/><path d="M6 4h10v5" fill="none" stroke="#e4e4f4" stroke-width="1.600"/><path d="M28 11l-8 7 8 7z" fill="#d4d4f4"/><rect x="0" y="18" width="11" height="9" fill="#111"/><path d="M5 20H2v2.500h3v2.500H2M6 20h4M8 20v5.500" stroke="#fff" stroke-width="1.100" fill="none"/></svg>
<svg style="left:2080px;top:588px;" width="30" height="30" viewBox="0 0 30 30"><path d="M8 20a8 8 0 1 1 13 0" fill="none" stroke="#e8e8e8" stroke-width="2"/><path d="M15 1v4M4 6l3 3M26 6l-3 3M0 16h4M26 16h4M13 22h9M13 25.500h7" stroke="#e8e8e8" stroke-width="1.800"/><rect x="0" y="18" width="11" height="9" fill="#111"/><path d="M5 20H2v2.500h3v2.500H2M6 20h4M8 20v5.500" stroke="#fff" stroke-width="1.100" fill="none"/></svg>
<svg style="left:2081px;top:644px;" width="28" height="28" viewBox="0 0 28 28"><circle cx="14" cy="14" r="10" fill="none" stroke="#555" stroke-width="2"/><path d="M9 19l2-5 8-8 3 3-8 8z" fill="#555"/></svg>
<div style="left:2115px;top:85px;width:445px;height:28px;background:#1f1f1f;"></div>
<div style="left:2119px;top:87px;width:52px;height:26px;background:#2b2b2b;"></div>
<div class="t" style="left:2125px;top:91.0px;font-size:14.5px;line-height:19px;color:#f0f0f0;">对象</div>
<div class="t" style="left:2183px;top:91.0px;font-size:14.5px;line-height:19px;color:#8e8e8e;">场次</div>
<div style="left:2115px;top:113px;width:445px;height:28px;background:#2b2b2b;"></div>
<svg style="left:2119px;top:119px;" width="15" height="14" viewBox="0 0 15 14"><path d="M0 2h15M0 7h15M0 12h15" stroke="#c8c8c8" stroke-width="2"/></svg>
<div class="t" style="left:2143px;top:117.0px;font-size:14px;line-height:18px;color:#b8b8b8;">文件</div>
<div class="t" style="left:2184px;top:117.0px;font-size:14px;line-height:18px;color:#b8b8b8;">编辑</div>
<div class="t" style="left:2226px;top:117.0px;font-size:14px;line-height:18px;color:#b8b8b8;">查看</div>
<div class="t" style="left:2268px;top:117.0px;font-size:14px;line-height:18px;color:#b8b8b8;">对象</div>
<div class="t" style="left:2310px;top:117.0px;font-size:14px;line-height:18px;color:#b8b8b8;">标签</div>
<div class="t" style="left:2352px;top:117.0px;font-size:14px;line-height:18px;color:#b8b8b8;">书签</div>
<svg style="left:2480px;top:118px;" width="78" height="17" viewBox="0 0 78 17"><circle cx="7" cy="7" r="4.800" fill="none" stroke="#b4b4b4" stroke-width="1.800"/><path d="M10.500 10.500l5 5" stroke="#b4b4b4" stroke-width="2"/><path d="M22 16V8l6-6 6 6v8h-4v-5h-4v5z" fill="none" stroke="#b4b4b4" stroke-width="1.700"/><path d="M41 4h15M44 9h9M47 14h3" stroke="#b4b4b4" stroke-width="2"/><path d="M68 3h-6v13h13v-6" fill="none" stroke="#b4b4b4" stroke-width="1.700"/><path d="M66 12l10-10M70 1.500h6.500V8" fill="none" stroke="#b4b4b4" stroke-width="1.700"/></svg>
<div style="left:2115px;top:141px;width:445px;height:20px;background:#262626;"></div>
<div style="left:2115px;top:161px;width:445px;height:20px;background:#2d2d2d;"></div>
<div style="left:2115px;top:181px;width:445px;height:20px;background:#262626;"></div>
<div style="left:2115px;top:201px;width:445px;height:20px;background:#2d2d2d;"></div>
<div style="left:2115px;top:221px;width:445px;height:20px;background:#262626;"></div>
<div style="left:2115px;top:241px;width:445px;height:20px;background:#2d2d2d;"></div>
<div style="left:2115px;top:261px;width:445px;height:20px;background:#262626;"></div>
<div style="left:2115px;top:281px;width:445px;height:20px;background:#2d2d2d;"></div>
<div style="left:2115px;top:301px;width:445px;height:20px;background:#262626;"></div>
<div style="left:2115px;top:321px;width:445px;height:341px;background:#2b2b2b;"></div>
<div style="left:2279px;top:141px;width:1px;height:521px;background:#232323;"></div>
<svg style="left:2110px;top:141px;" width="60" height="180" viewBox="0 0 60 180"><path d="M11.500 0v112M11.500 10h9M11.500 30h9M11.500 50h9M17.500 78v12h10M23.500 118v8M43.500 138v32M43.500 150h8M43.500 170h8" stroke="#5a5a5a" stroke-width="1" fill="none"/><rect x="7.500" y="65.500" width="8" height="8" fill="#2b2b2b" stroke="#777"/><path d="M9.500 69.500h4" stroke="#999"/><rect x="7.500" y="105.500" width="8" height="8" fill="#2b2b2b" stroke="#777"/><path d="M9.500 109.500h4" stroke="#999"/><rect x="19.500" y="125.500" width="8" height="8" fill="#2b2b2b" stroke="#777"/><path d="M21.500 129.500h4" stroke="#999"/></svg>
<svg style="left:2130px;top:143.5px;" width="15" height="15" viewBox="0 0 15 15"><circle cx="7.500" cy="7.500" r="6" fill="none" stroke="#d0d0d0" stroke-width="1.300"/><path d="M7.500 1.500v12M4.500 3c-1 3-1 6 0 9M10.500 3c1 3 1 6 0 9M1.500 7.500h12" stroke="#d0d0d0" stroke-width="1" fill="none"/></svg>
<div class="t" style="left:2149px;top:141.5px;font-size:14.5px;line-height:19px;color:#f2c240;">Octane天空</div>
<svg style="left:2235px;top:145px;" width="11" height="11" viewBox="0 0 11 11"><rect x="0.500" y="0.500" width="10" height="10" rx="1.500" fill="#666"/><path d="M3 8l5-5" stroke="#2b2b2b" stroke-width="1.600"/></svg>
<svg style="left:2250px;top:142px;" width="8" height="18" viewBox="0 0 8 18"><circle cx="4" cy="4.500" r="3" fill="#5a5a5a"/><circle cx="4" cy="13.500" r="3" fill="#5a5a5a"/></svg>
<svg style="left:2130px;top:163.5px;" width="15" height="15" viewBox="0 0 15 15"><path d="M1 5h7v8H1z" fill="none" stroke="#e0e0e0" stroke-width="1.400"/><path d="M2 3h6v2" fill="none" stroke="#e0e0e0" stroke-width="1.200"/><path d="M14 5l-4.500 4 4.500 4z" fill="#e0e0e0"/></svg>
<div class="t" style="left:2149px;top:161.5px;font-size:14.5px;line-height:19px;color:#b8b8b8;">摄像机</div>
<svg style="left:2235px;top:165px;" width="11" height="11" viewBox="0 0 11 11"><rect x="0.500" y="0.500" width="10" height="10" rx="1.500" fill="#666"/><path d="M3 8l5-5" stroke="#2b2b2b" stroke-width="1.600"/></svg>
<svg style="left:2250px;top:162px;" width="8" height="18" viewBox="0 0 8 18"><circle cx="4" cy="4.500" r="3" fill="#5a5a5a"/><circle cx="4" cy="13.500" r="3" fill="#5a5a5a"/></svg>
<svg style="left:2130px;top:183.5px;" width="15" height="15" viewBox="0 0 15 15"><path d="M7.500 3l7 4.500-7 4.500-7-4.500z" fill="#5ec8f4"/><path d="M4 5.200l7 4.500M11 5.200l-7 4.500" stroke="#2b2b2b" stroke-width="1"/></svg>
<div class="t" style="left:2149px;top:181.5px;font-size:14.5px;line-height:19px;color:#b8b8b8;">平面</div>
<svg style="left:2235px;top:185px;" width="11" height="11" viewBox="0 0 11 11"><rect x="0.500" y="0.500" width="10" height="10" rx="1.500" fill="#666"/><path d="M3 8l5-5" stroke="#2b2b2b" stroke-width="1.600"/></svg>
<svg style="left:2250px;top:182px;" width="8" height="18" viewBox="0 0 8 18"><circle cx="4" cy="4.500" r="3" fill="#5a5a5a"/><circle cx="4" cy="13.500" r="3" fill="#5a5a5a"/></svg>
<svg style="left:2261px;top:185px;" width="14" height="12" viewBox="0 0 14 12"><path d="M1.500 6.500l4 4 7-9" fill="none" stroke="#3fd878" stroke-width="2.200"/></svg>
<svg style="left:2130px;top:203.5px;" width="15" height="15" viewBox="0 0 15 15"><path d="M7.500 1l6 3v7l-6 3-6-3v-7z" fill="#6fd0f8"/><path d="M1.500 4l6 3 6-3M7.500 7v7" stroke="#2b2b2b" stroke-width="1" fill="none"/></svg>
<div class="t" style="left:2149px;top:201.5px;font-size:14.5px;line-height:19px;color:#b8b8b8;">立方体</div>
<svg style="left:2235px;top:205px;" width="11" height="11" viewBox="0 0 11 11"><rect x="0.500" y="0.500" width="10" height="10" rx="1.500" fill="#666"/><path d="M3 8l5-5" stroke="#2b2b2b" stroke-width="1.600"/></svg>
<svg style="left:2250px;top:202px;" width="8" height="18" viewBox="0 0 8 18"><circle cx="4" cy="4.500" r="3" fill="#5a5a5a"/><circle cx="4" cy="13.500" r="3" fill="#5a5a5a"/></svg>
<svg style="left:2261px;top:205px;" width="14" height="12" viewBox="0 0 14 12"><path d="M1.500 6.500l4 4 7-9" fill="none" stroke="#3fd878" stroke-width="2.200"/></svg>
<svg style="left:2142px;top:223.5px;" width="15" height="15" viewBox="0 0 15 15"><path d="M5 2h5l3 8-5.500 4-5.500-4z" fill="none" stroke="#9a8ef0" stroke-width="1.400"/><path d="M7.500 5v5" stroke="#9a8ef0" stroke-width="1.400"/></svg>
<div class="t" style="left:2161px;top:221.5px;font-size:14.5px;line-height:19px;color:#b8b8b8;">锥化</div>
<svg style="left:2235px;top:225px;" width="11" height="11" viewBox="0 0 11 11"><rect x="0.500" y="0.500" width="10" height="10" rx="1.500" fill="#666"/><path d="M3 8l5-5" stroke="#2b2b2b" stroke-width="1.600"/></svg>
<svg style="left:2250px;top:222px;" width="8" height="18" viewBox="0 0 8 18"><circle cx="4" cy="4.500" r="3" fill="#5a5a5a"/><circle cx="4" cy="13.500" r="3" fill="#5a5a5a"/></svg>
<svg style="left:2261px;top:225px;" width="14" height="12" viewBox="0 0 14 12"><path d="M1.500 6.500l4 4 7-9" fill="none" stroke="#3fd878" stroke-width="2.200"/></svg>
<svg style="left:2130px;top:243.5px;" width="15" height="15" viewBox="0 0 15 15"><path d="M6.500 7.500c-.5-4-3-6-5.500-5.500 0 3 1 5 3 6-1.500 1-2 3-1 5 2.500 0 3.500-2 3.500-5.500z" fill="#f0f0f0"/><path d="M7.500 1v13" stroke="#58d878" stroke-width="1.200"/><path d="M8.500 7.500c.5-4 3-6 5.500-5.500 0 3-1 5-3 6 1.500 1 2 3 1 5-2.500 0-3.500-2-3.500-5.500z" fill="#58d878"/></svg>
<div class="t" style="left:2149px;top:241.5px;font-size:14.5px;line-height:19px;color:#b8b8b8;">对称</div>
<svg style="left:2235px;top:245px;" width="11" height="11" viewBox="0 0 11 11"><rect x="0.500" y="0.500" width="10" height="10" rx="1.500" fill="#666"/><path d="M3 8l5-5" stroke="#2b2b2b" stroke-width="1.600"/></svg>
<svg style="left:2250px;top:242px;" width="8" height="18" viewBox="0 0 8 18"><circle cx="4" cy="4.500" r="3" fill="#5a5a5a"/><circle cx="4" cy="13.500" r="3" fill="#5a5a5a"/></svg>
<svg style="left:2261px;top:245px;" width="14" height="12" viewBox="0 0 14 12"><path d="M1.500 6.500l4 4 7-9" fill="none" stroke="#3fd878" stroke-width="2.200"/></svg>
<svg style="left:2142px;top:263.5px;" width="15" height="15" viewBox="0 0 15 15"><path d="M2 3.500v9c0 3 11 3 11 0v-9z" fill="#6fd0f8"/><ellipse cx="7.500" cy="3.500" rx="5.500" ry="2.300" fill="#b4e8ff"/></svg>
<div class="t" style="left:2161px;top:261.5px;font-size:14.5px;line-height:19px;color:#b8b8b8;">圆柱体</div>
<svg style="left:2235px;top:265px;" width="11" height="11" viewBox="0 0 11 11"><rect x="0.500" y="0.500" width="10" height="10" rx="1.500" fill="#666"/><path d="M3 8l5-5" stroke="#2b2b2b" stroke-width="1.600"/></svg>
<svg style="left:2250px;top:262px;" width="8" height="18" viewBox="0 0 8 18"><circle cx="4" cy="4.500" r="3" fill="#5a5a5a"/><circle cx="4" cy="13.500" r="3" fill="#5a5a5a"/></svg>
<svg style="left:2261px;top:265px;" width="14" height="12" viewBox="0 0 14 12"><path d="M1.500 6.500l4 4 7-9" fill="none" stroke="#3fd878" stroke-width="2.200"/></svg>
<svg style="left:2154px;top:283.5px;" width="15" height="15" viewBox="0 0 15 15"><path d="M5 2h5l3 8-5.500 4-5.500-4z" fill="none" stroke="#9a8ef0" stroke-width="1.400"/><path d="M7.500 5v5" stroke="#9a8ef0" stroke-width="1.400"/></svg>
<div class="t" style="left:2173px;top:281.5px;font-size:14.5px;line-height:19px;color:#b8b8b8;">锥化</div>
<svg style="left:2235px;top:285px;" width="11" height="11" viewBox="0 0 11 11"><rect x="0.500" y="0.500" width="10" height="10" rx="1.500" fill="#666"/><path d="M3 8l5-5" stroke="#2b2b2b" stroke-width="1.600"/></svg>
<svg style="left:2250px;top:282px;" width="8" height="18" viewBox="0 0 8 18"><circle cx="4" cy="4.500" r="3" fill="#5a5a5a"/><circle cx="4" cy="13.500" r="3" fill="#5a5a5a"/></svg>
<svg style="left:2261px;top:285px;" width="14" height="12" viewBox="0 0 14 12"><path d="M1.500 6.500l4 4 7-9" fill="none" stroke="#3fd878" stroke-width="2.200"/></svg>
<svg style="left:2154px;top:303.5px;" width="15" height="15" viewBox="0 0 15 15"><path d="M7.500 1l6 3.500v6.500l-6 3.500-6-3.500v-6.500z" fill="none" stroke="#9a8ef0" stroke-width="1.400"/><path d="M4.500 5l3 2 3-2M7.500 7v4" stroke="#9a8ef0" stroke-width="1.300" fill="none"/></svg>
<div class="t" style="left:2173px;top:301.5px;font-size:14.5px;line-height:19px;color:#b8b8b8;">斜切</div>
<svg style="left:2235px;top:305px;" width="11" height="11" viewBox="0 0 11 11"><rect x="0.500" y="0.500" width="10" height="10" rx="1.500" fill="#666"/><path d="M3 8l5-5" stroke="#2b2b2b" stroke-width="1.600"/></svg>
<svg style="left:2250px;top:302px;" width="8" height="18" viewBox="0 0 8 18"><circle cx="4" cy="4.500" r="3" fill="#5a5a5a"/><circle cx="4" cy="13.500" r="3" fill="#5a5a5a"/></svg>
<svg style="left:2261px;top:305px;" width="14" height="12" viewBox="0 0 14 12"><path d="M1.500 6.500l4 4 7-9" fill="none" stroke="#3fd878" stroke-width="2.200"/></svg>
<svg style="left:2261px;top:164px;" width="14" height="14" viewBox="0 0 14 14"><rect x="0" y="0" width="14" height="14" rx="2" fill="#f0f0f0"/><circle cx="7" cy="7" r="2.200" fill="none" stroke="#222" stroke-width="1.600"/><path d="M2 5V2h3M9 2h3v3M12 9v3H9M5 12H2V9" stroke="#222" stroke-width="1.600" fill="none"/></svg>
<svg style="left:2280px;top:142px;" width="18" height="18" viewBox="0 0 18 18"><rect x="1" y="1" width="16" height="16" fill="#111" stroke="#f0a030" stroke-width="1.600"/><circle cx="9" cy="9" r="6" fill="#28a8f0"/><path d="M9 3a6 6 0 0 1 0 12 4.500 6 0 0 0 0-12z" fill="#111"/></svg>
<svg style="left:2283px;top:184px;" width="14" height="14" viewBox="0 0 14 14"><path d="M1 13V1h12" fill="none" stroke="#d8d8f0" stroke-width="1.500"/><path d="M3.500 3.500h8c0 4-3 8-8 8z" fill="#c8c8e8"/></svg>
<svg style="left:2283px;top:204px;" width="14" height="14" viewBox="0 0 14 14"><path d="M1 13V1h12" fill="none" stroke="#d8d8f0" stroke-width="1.500"/><path d="M3.500 3.500h8c0 4-3 8-8 8z" fill="#c8c8e8"/></svg>
<svg style="left:2283px;top:264px;" width="14" height="14" viewBox="0 0 14 14"><path d="M1 13V1h12" fill="none" stroke="#d8d8f0" stroke-width="1.500"/><path d="M3.500 3.500h8c0 4-3 8-8 8z" fill="#c8c8e8"/></svg>
<div style="left:2115px;top:662px;width:445px;height:28px;background:#1f1f1f;"></div>
<div style="left:2119px;top:664px;width:47px;height:26px;background:#2b2b2b;"></div>
<div class="t" style="left:2125px;top:667.0px;font-size:14.5px;line-height:19px;color:#f0f0f0;">属性</div>
<div class="t" style="left:2183px;top:667.0px;font-size:14.5px;line-height:19px;color:#8e8e8e;">层</div>
<div style="left:2115px;top:690px;width:445px;height:688px;background:#2b2b2b;"></div>
<svg style="left:2119px;top:695px;" width="15" height="14" viewBox="0 0 15 14"><path d="M0 2h15M0 7h15M0 12h15" stroke="#f0f0f0" stroke-width="2.200"/></svg>
<div class="t" style="left:2143px;top:693.0px;font-size:14px;line-height:18px;color:#b8b8b8;">模式</div>
<div class="t" style="left:2184px;top:693.0px;font-size:14px;line-height:18px;color:#b8b8b8;">编辑</div>
<div class="t" style="left:2226px;top:693.0px;font-size:14px;line-height:18px;color:#b8b8b8;">用户数据</div>
<svg style="left:2400px;top:693px;" width="160" height="18" viewBox="0 0 160 18"><path d="M2 9h13M8 3l-6 6 6 6" fill="none" stroke="#b4b4b4" stroke-width="1.800"/><path d="M22 9h13M29 3l6 6-6 6" fill="none" stroke="#444" stroke-width="1.800"/><path d="M48 16V3M42 9l6-6 6 6" fill="none" stroke="#b4b4b4" stroke-width="1.800"/><circle cx="67" cy="8" r="4.500" fill="none" stroke="#b4b4b4" stroke-width="1.800"/><path d="M70.500 11.500l5 5" stroke="#b4b4b4" stroke-width="2"/><path d="M81 4h15M84 9h9M87 14h3" stroke="#b4b4b4" stroke-width="2"/><rect x="102" y="9" width="12" height="8" rx="1" fill="none" stroke="#b4b4b4" stroke-width="1.700"/><path d="M104.500 9V6a3.500 3.500 0 0 1 7 0v3" fill="none" stroke="#b4b4b4" stroke-width="1.700"/><circle cx="128" cy="9.500" r="7" fill="none" stroke="#b4b4b4" stroke-width="1.700"/><circle cx="128" cy="9.500" r="1.800" fill="#b4b4b4"/><path d="M146 3h-6v13h13v-6" fill="none" stroke="#b4b4b4" stroke-width="1.700"/><path d="M144 12l10-10M148 1.500h6.500V8" fill="none" stroke="#b4b4b4" stroke-width="1.700"/></svg>
<svg style="left:2121px;top:722px;" width="17" height="17" viewBox="0 0 17 17"><rect x="0.500" y="0.500" width="16" height="16" rx="2" fill="#d8d8d8"/><path d="M2 14l4-6 3 4 2-2 4 4z" fill="#2b2b2b"/><circle cx="11.500" cy="5" r="1.500" fill="#2b2b2b"/></svg>
<div class="t" style="left:2145px;top:721.5px;font-size:14.5px;line-height:19px;color:#c0c0c0;">图像纹理 [图像纹理]</div>
<div style="left:2448px;top:720px;width:105px;height:23px;background:#363636;border-radius:3px;"></div>
<div class="t" style="left:2455px;top:722.5px;font-size:14px;line-height:18px;color:#d0d0d0;">自定义</div>
<div style="left:2530px;top:722px;width:1px;height:19px;background:#2b2b2b;"></div>
<svg style="left:2537px;top:729px;" width="9" height="6" viewBox="0 0 9 6"><path d="M0 0h9L4.500 5z" fill="#c0c0c0"/></svg>
<div style="left:2121px;top:746px;width:52px;height:23px;background:#363636;border-radius:4px;"></div>
<div class="t" style="left:2147px;top:748.5px;font-size:14px;line-height:18px;color:#c0c0c0;transform:translateX(-50%);">基本</div>
<div style="left:2177px;top:746px;width:52px;height:23px;background:#5559a6;border-radius:4px;"></div>
<div class="t" style="left:2203px;top:748.5px;font-size:14px;line-height:18px;color:#ffffff;transform:translateX(-50%);">着色</div>
<div style="left:2235px;top:746px;width:49px;height:23px;background:#363636;border-radius:4px;"></div>
<div class="t" style="left:2259px;top:748.5px;font-size:14px;line-height:18px;color:#c0c0c0;transform:translateX(-50%);">动画</div>
<div class="t" style="left:2121px;top:776.5px;font-size:16px;line-height:21px;color:#f4f4f4;font-weight:bold;">着色</div>
<svg style="left:2122px;top:808px;" width="10" height="10" viewBox="0 0 10 10"><path d="M5 0.800L9.200 5 5 9.200 0.800 5z" fill="none" stroke="#a0a0a0" stroke-width="1.500"/></svg>
<div class="t" style="left:2143px;top:804.0px;font-size:14px;line-height:18px;color:#b8b8b8;">文件</div>
<svg style="left:2174px;top:810px;" width="9" height="7" viewBox="0 0 9 7"><path d="M1 1l3.500 4L8 1" fill="none" stroke="#c0c0c0" stroke-width="1.500"/></svg>
<div style="left:2185px;top:803px;width:348px;height:21px;background:#1c1c1c;"></div>
<div class="t" style="left:2190px;top:803.5px;font-size:14.5px;line-height:19px;color:#e8e8e8;">env.hdri</div>
<svg style="left:2535px;top:805px;" width="17" height="16" viewBox="0 0 17 16"><path d="M1 3h5l2 2h8v10H1z" fill="#4a4a4a" stroke="#666" stroke-width="1"/></svg>
<div style="left:2185px;top:826px;width:368px;height:60px;background:#272727;"></div>
<div style="left:2185px;top:826px;width:56px;height:60px;background:#2a2a2a;"></div>
<div style="left:2240px;top:826px;width:1px;height:60px;background:#222;"></div>
<div style="left:2193px;top:837px;width:41px;height:42px;background:#000;"></div>
<div class="t" style="left:2249px;top:848.0px;font-size:14px;line-height:18px;color:#b8b8b8;">读取纹理错误</div>
<div style="left:2132px;top:888px;width:78px;height:23px;background:#363636;border-radius:10px;"></div>
<div class="t" style="left:2171.0px;top:890.5px;font-size:14px;line-height:18px;color:#c8c8c8;transform:translateX(-50%);">重新加载</div>
<div style="left:2224px;top:888px;width:50px;height:23px;background:#363636;border-radius:10px;"></div>
<div class="t" style="left:2249.0px;top:890.5px;font-size:14px;line-height:18px;color:#c8c8c8;transform:translateX(-50%);">编辑</div>
<div style="left:2288px;top:888px;width:50px;height:23px;background:#363636;border-radius:10px;"></div>
<div class="t" style="left:2313.0px;top:890.5px;font-size:14px;line-height:18px;color:#c8c8c8;transform:translateX(-50%);">定位</div>
<div style="left:2352px;top:888px;width:78px;height:23px;background:#363636;border-radius:10px;"></div>
<div class="t" style="left:2391.0px;top:890.5px;font-size:14px;line-height:18px;color:#c8c8c8;transform:translateX(-50%);">适合图像</div>
<svg style="left:2122px;top:932px;" width="10" height="10" viewBox="0 0 10 10"><path d="M5 0.800L9.200 5 5 9.200 0.800 5z" fill="none" stroke="#a0a0a0" stroke-width="1.500"/></svg>
<div class="t" style="left:2143px;top:928.0px;font-size:14px;line-height:18px;color:#b8b8b8;">强度</div>
<div style="left:2176px;top:926px;width:83px;height:22px;background:#1c1c1c;"></div>
<div class="t" style="left:2218px;top:927.5px;font-size:14.5px;line-height:19px;color:#e0e0e0;transform:translateX(-50%);">1.</div>
<div style="left:2264px;top:932px;width:218px;height:10px;background:#5559a6;"></div>
<div style="left:2480px;top:926px;width:4px;height:22px;background:#c8c8d0;"></div>
<div style="left:2502px;top:926px;width:49px;height:22px;background:#363636;border-radius:4px;"></div>
<div class="t" style="left:2526px;top:928.0px;font-size:14px;line-height:18px;color:#c8c8c8;transform:translateX(-50%);">纹理</div>
<div class="t" style="left:2143px;top:963.0px;font-size:14px;line-height:18px;color:#b8b8b8;">色彩空间</div>
<div style="left:2204px;top:961px;width:275px;height:22px;background:#363636;border-radius:3px;"></div>
<div class="t" style="left:2211px;top:962.0px;font-size:14.5px;line-height:19px;color:#d0d0d0;">Linear sRGB + legacy gamma</div>
<svg style="left:2464px;top:970px;" width="9" height="6" viewBox="0 0 9 6"><path d="M0 0h9L4.500 5z" fill="#c0c0c0"/></svg>
<svg style="left:2122px;top:997px;" width="10" height="10" viewBox="0 0 10 10"><path d="M5 0.800L9.200 5 5 9.200 0.800 5z" fill="none" stroke="#a0a0a0" stroke-width="1.500"/></svg>
<div class="t" style="left:2143px;top:993.0px;font-size:14px;line-height:18px;color:#b8b8b8;">传统伽马</div>
<div style="left:2232px;top:991px;width:83px;height:22px;background:#1c1c1c;"></div>
<div class="t" style="left:2274px;top:992.5px;font-size:14.5px;line-height:19px;color:#e0e0e0;transform:translateX(-50%);">1.</div>
<div style="left:2320px;top:999px;width:231px;height:7px;background:#1c1c1c;"></div>
<div style="left:2320px;top:997px;width:27px;height:10px;background:#5559a6;"></div>
<div style="left:2346px;top:992px;width:3px;height:20px;background:#c8c8d0;"></div>
<svg style="left:2122px;top:1022px;" width="10" height="10" viewBox="0 0 10 10"><path d="M5 0.800L9.200 5 5 9.200 0.800 5z" fill="none" stroke="#a0a0a0" stroke-width="1.500"/></svg>
<div class="t" style="left:2143px;top:1018.0px;font-size:14px;line-height:18px;color:#b8b8b8;">反转</div>
<div style="left:2232px;top:1021px;width:12px;height:12px;border:1.500px solid #909090;border-radius:2px;"></div>
<svg style="left:2122px;top:1046px;" width="10" height="10" viewBox="0 0 10 10"><path d="M5 0.800L9.200 5 5 9.200 0.800 5z" fill="none" stroke="#a0a0a0" stroke-width="1.500"/></svg>
<div class="t" style="left:2143px;top:1042.0px;font-size:14px;line-height:18px;color:#b8b8b8;">反转线性空间</div>
<div style="left:2232px;top:1045px;width:12px;height:12px;background:#5559a6;border-radius:2px;"></div>
<svg style="left:2233px;top:1046px;" width="10" height="10" viewBox="0 0 10 10"><path d="M1.500 5l2.500 3 4.500-6" fill="none" stroke="#fff" stroke-width="1.800"/></svg>
<svg style="left:2122px;top:1070px;" width="10" height="10" viewBox="0 0 10 10"><path d="M5 0.800L9.200 5 5 9.200 0.800 5z" fill="none" stroke="#a0a0a0" stroke-width="1.500"/></svg>
<div class="t" style="left:2143px;top:1066.0px;font-size:14px;line-height:18px;color:#b8b8b8;">边框模式 (U)</div>
<div style="left:2232px;top:1064px;width:319px;height:22px;background:#363636;border-radius:3px;"></div>
<div class="t" style="left:2239px;top:1066.0px;font-size:14px;line-height:18px;color:#d0d0d0;">包裹</div>
<svg style="left:2537px;top:1073px;" width="9" height="6" viewBox="0 0 9 6"><path d="M0 0h9L4.500 5z" fill="#c0c0c0"/></svg>
<svg style="left:2122px;top:1094px;" width="10" height="10" viewBox="0 0 10 10"><path d="M5 0.800L9.200 5 5 9.200 0.800 5z" fill="none" stroke="#a0a0a0" stroke-width="1.500"/></svg>
<div class="t" style="left:2143px;top:1090.0px;font-size:14px;line-height:18px;color:#b8b8b8;">边框模式 (V)</div>
<div style="left:2232px;top:1088px;width:319px;height:22px;background:#363636;border-radius:3px;"></div>
<div class="t" style="left:2239px;top:1090.0px;font-size:14px;line-height:18px;color:#d0d0d0;">包裹</div>
<svg style="left:2537px;top:1097px;" width="9" height="6" viewBox="0 0 9 6"><path d="M0 0h9L4.500 5z" fill="#c0c0c0"/></svg>
<svg style="left:2122px;top:1118px;" width="10" height="10" viewBox="0 0 10 10"><path d="M5 0.800L9.200 5 5 9.200 0.800 5z" fill="none" stroke="#a0a0a0" stroke-width="1.500"/></svg>
<div class="t" style="left:2143px;top:1114.0px;font-size:14px;line-height:18px;color:#b8b8b8;">类型</div>
<div style="left:2232px;top:1112px;width:319px;height:22px;background:#363636;border-radius:3px;"></div>
<div class="t" style="left:2239px;top:1114.0px;font-size:14px;line-height:18px;color:#d0d0d0;">法线</div>
<svg style="left:2537px;top:1121px;" width="9" height="6" viewBox="0 0 9 6"><path d="M0 0h9L4.500 5z" fill="#c0c0c0"/></svg>
<div style="left:2132px;top:1136px;width:51px;height:23px;background:#363636;border-radius:10px;"></div>
<div class="t" style="left:2143px;top:1137.5px;font-size:14.5px;line-height:19px;color:#c8c8c8;">自动</div>
<div style="left:2132px;top:1160px;width:75px;height:23px;background:#363636;border-radius:10px;"></div>
<div class="t" style="left:2143px;top:1161.5px;font-size:14.5px;line-height:19px;color:#c8c8c8;">UV 变换</div>
<svg style="left:2122px;top:1190px;" width="10" height="10" viewBox="0 0 10 10"><path d="M5 0.800L9.200 5 5 9.200 0.800 5z" fill="none" stroke="#a0a0a0" stroke-width="1.500"/></svg>
<svg style="left:2144px;top:1190px;" width="8" height="10" viewBox="0 0 8 10"><path d="M1.500 1l4.500 4-4.500 4" fill="none" stroke="#d0d0d0" stroke-width="1.600"/></svg>
<div class="t" style="left:2154px;top:1186.0px;font-size:14px;line-height:18px;color:#b8b8b8;">投射</div>
<div style="left:2232px;top:1184px;width:286px;height:22px;background:#1c1c1c;"></div>
<div class="t" style="left:2239px;top:1186.0px;font-size:14px;line-height:18px;color:#d8d8d8;">纹理投射</div>
<svg style="left:2498px;top:1187px;" width="16" height="16" viewBox="0 0 16 16"><rect x="0.500" y="0.500" width="15" height="15" rx="2" fill="#d8d8d8"/><path d="M2 13l4-6 3 4 2-2 3 4z" fill="#2b2b2b"/></svg>
<svg style="left:2520px;top:1193px;" width="9" height="6" viewBox="0 0 9 6"><path d="M0 0h9L4.500 5z" fill="#c0c0c0"/></svg>
<svg style="left:2534px;top:1186px;" width="17" height="18" viewBox="0 0 17 18"><path d="M2 16l1.500-5 9-9 3 3-9 9z" fill="none" stroke="#c0c0c0" stroke-width="1.600"/><path d="M11 3.500l3 3" stroke="#c0c0c0" stroke-width="1.600"/></svg>
<div class="t" style="left:2143px;top:1212.0px;font-size:14px;line-height:18px;color:#b8b8b8;">IES 缩放</div>
<div style="left:2232px;top:1210px;width:319px;height:22px;background:#363636;border-radius:3px;"></div>
<div class="t" style="left:2239px;top:1212.0px;font-size:14px;line-height:18px;color:#d0d0d0;">归一化峰值到1.0</div>
<svg style="left:2537px;top:1219px;" width="9" height="6" viewBox="0 0 9 6"><path d="M0 0h9L4.500 5z" fill="#c0c0c0"/></svg>
<svg style="left:2126px;top:1251px;" width="30" height="30" viewBox="0 0 30 30"><g transform="translate(15 15)"><path d="M0 -4 C5 -7 10 -6 14 -2 L6 -1 Z" fill="#e0e0e0" transform="rotate(0)"/><path d="M0 -4 C5 -7 10 -6 14 -2 L6 -1 Z" fill="#e0e0e0" transform="rotate(72)"/><path d="M0 -4 C5 -7 10 -6 14 -2 L6 -1 Z" fill="#e0e0e0" transform="rotate(144)"/><path d="M0 -4 C5 -7 10 -6 14 -2 L6 -1 Z" fill="#e0e0e0" transform="rotate(216)"/><path d="M0 -4 C5 -7 10 -6 14 -2 L6 -1 Z" fill="#e0e0e0" transform="rotate(288)"/><circle r="3.500" fill="#2b2b2b"/></g></svg>
<div class="t" style="left:2147px;top:1248.0px;font-size:6px;line-height:8px;color:#d0d0d0;font-weight:bold;">HELP</div>
<div style="left:0px;top:1290px;width:2075px;height:88px;background:#2b2b2b;"></div>
<div style="left:42px;top:1295px;width:32px;height:30px;background:#383838;"></div>
<svg style="left:50px;top:1302px;" width="16" height="16" viewBox="0 0 16 16"><path d="M8 1.500L14.500 8 8 14.500 1.500 8z" fill="none" stroke="#e0e0e0" stroke-width="2"/></svg>
<div style="left:705px;top:1295px;width:198px;height:30px;background:#383838;"></div>
<svg style="left:709px;top:1300px;" width="196" height="20" viewBox="0 0 196 20"><path d="M4 3v14" stroke="#e0e0e0" stroke-width="2.400"/><path d="M16 3L7 10l9 7z" fill="#e0e0e0"/><path d="M34 6l4 4-4 4-4-4z" fill="none" stroke="#e0e0e0" stroke-width="1.600"/><path d="M48 4l-8 6 8 6z" fill="#e0e0e0"/><path d="M68 4l-9 6 9 6z" fill="#e0e0e0"/><path d="M72 4v12" stroke="#e0e0e0" stroke-width="2.400"/><path d="M88 2.500l13 7.500-13 7.500z" fill="#e0e0e0"/><path d="M117 4v12" stroke="#e0e0e0" stroke-width="2.400"/><path d="M121 4l9 6-9 6z" fill="#e0e0e0"/><path d="M141 4l8 6-8 6z" fill="#e0e0e0"/><path d="M155 6l4 4-4 4-4-4z" fill="none" stroke="#e0e0e0" stroke-width="1.600"/><path d="M170 3l9 7-9 7z" fill="#e0e0e0"/><path d="M182 3v14" stroke="#e0e0e0" stroke-width="2.400"/></svg>
<div style="left:912px;top:1295px;width:56px;height:30px;background:#5559a6;"></div>
<svg style="left:915px;top:1299px;" width="50" height="22" viewBox="0 0 50 22"><path d="M4 9V5h15M23 13v4H8" fill="none" stroke="#f0f0ff" stroke-width="1.700"/><path d="M17 1.500l5 3.500-5 3.500zM10 13.500l-5 3.500 5 3.500z" fill="#f0f0ff"/><path d="M32 17h3M37 17h3M42 17h5M32 14v3M37 14v3" stroke="#f0f0ff" stroke-width="2"/><path d="M36.500 10l3-7 3 7M37.500 8h4" stroke="#c8c8f0" stroke-width="1.200" fill="none"/></svg>
<svg style="left:962px;top:1319px;" width="6" height="6" viewBox="0 0 6 6"><path d="M6 0v6H0z" fill="#b0b0d8"/></svg>
<svg style="left:934px;top:1319px;" width="6" height="6" viewBox="0 0 6 6"><path d="M6 0v6H0z" fill="#b0b0d8"/></svg>
<svg style="left:971px;top:1299px;" width="24" height="22" viewBox="0 0 24 22"><path d="M2 8h4l6-5v16l-6-5H2z" fill="#e0e0e0"/><path d="M15 7c2 2 2 6 0 8M18 4c4 4 4 10 0 14" fill="none" stroke="#e0e0e0" stroke-width="1.700"/></svg>
<div style="left:1007px;top:1297px;width:92px;height:26px;background:#1c1c1c;border-radius:3px;"></div>
<div class="t" style="left:1053px;top:1300.0px;font-size:15px;line-height:20px;color:#e0e0e0;transform:translateX(-50%);">0 F</div>
<div style="left:1109px;top:1295px;width:85px;height:30px;background:#383838;"></div>
<svg style="left:1113px;top:1299px;" width="80" height="22" viewBox="0 0 80 22"><circle cx="11" cy="11" r="10" fill="#e85a68"/><path d="M11 5.500l5.500 5.500-5.500 5.500L5.500 11z" fill="none" stroke="#3a1a1e" stroke-width="1.800"/><circle cx="39" cy="11" r="10" fill="#e85a68"/><path d="M35 16l4-10 4 10M36.500 12.500h5" stroke="#3a1a1e" stroke-width="2" fill="none"/><circle cx="67" cy="11" r="10" fill="#d8d8d8"/><circle cx="67" cy="11" r="3" fill="none" stroke="#383838" stroke-width="2.400"/><path d="M67 5v2M67 15v2M61 11h2M71 11h2M62.800 6.800l1.400 1.400M69.800 13.800l1.400 1.400M71.200 6.800l-1.400 1.400M64.200 13.800l-1.400 1.400" stroke="#383838" stroke-width="2"/></svg>
<svg style="left:1132px;top:1319px;" width="6" height="6" viewBox="0 0 6 6"><path d="M6 0v6H0z" fill="#9a9a9a"/></svg>
<div style="left:1204px;top:1295px;width:56px;height:30px;background:#383838;"></div>
<svg style="left:1207px;top:1299px;" width="52" height="22" viewBox="0 0 52 22"><circle cx="11" cy="11" r="9.500" fill="#d8d8d8"/><rect x="7.500" y="4" width="7" height="12" rx="3.500" fill="none" stroke="#383838" stroke-width="1.600"/><path d="M11 4v5M7.500 9h7" stroke="#383838" stroke-width="1.400"/><path d="M46 5A9 9 0 1 0 48 14" fill="none" stroke="#d0d0d0" stroke-width="1.800"/><path d="M39 13l7-8" stroke="#d0d0d0" stroke-width="1.800"/><circle cx="38.500" cy="13.500" r="2.200" fill="none" stroke="#d0d0d0" stroke-width="1.400"/></svg>
<div style="left:1271px;top:1295px;width:139px;height:30px;background:#383838;"></div>
<div style="left:1382px;top:1295px;width:28px;height:30px;background:#5559a6;"></div>
<svg style="left:1274px;top:1299px;" width="136" height="22" viewBox="0 0 136 22"><path d="M10 8l3 3-3 3-3-3z" fill="none" stroke="#e0e0e0" stroke-width="1.500"/><path d="M10 1l-2.500 3h5zM10 21l-2.500-3h5zM0 11l3-2.500v5zM20 11l-3-2.500v5z" fill="#e0e0e0"/><path d="M38 8l3 3-3 3-3-3z" fill="none" stroke="#e0e0e0" stroke-width="1.500"/><path d="M30 14A9 9 0 0 1 36 2.500M46 8A9 9 0 0 1 40 19.500" fill="none" stroke="#e0e0e0" stroke-width="1.700"/><path d="M35 0l4 2.500-4 3zM41 22l-4-2.500 4-3z" fill="#e0e0e0"/><path d="M58 3h15v15h-8" fill="none" stroke="#e0e0e0" stroke-width="1.700"/><path d="M62 11l3 3-3 3-3-3z" fill="none" stroke="#e0e0e0" stroke-width="1.400"/><path d="M58 3v5" stroke="#e0e0e0" stroke-width="1.700"/><rect x="86" y="3" width="16" height="6.500" rx="3" fill="#e0e0e0"/><rect x="86" y="12.500" width="16" height="6.500" rx="3" fill="#e0e0e0"/><circle cx="90" cy="6.200" r="1.500" fill="#383838"/><circle cx="98" cy="15.800" r="1.500" fill="#383838"/><path d="M114 3l14 16" stroke="#f0f0ff" stroke-width="1.800"/><circle cx="117" cy="15" r="3" fill="#f0f0ff"/><path d="M124 4a3 3 0 0 1 4 4l-6 6" fill="none" stroke="#f0f0ff" stroke-width="1.600"/><path d="M126 14l6 5" stroke="#f0f0ff" stroke-width="1.600"/></svg>
<div style="left:2041px;top:1296px;width:29px;height:30px;background:#383838;"></div>
<svg style="left:2046px;top:1301px;" width="20" height="20" viewBox="0 0 20 20"><path d="M3 2v15h15" fill="none" stroke="#e0e0e0" stroke-width="1.600"/><path d="M5 15L16 4M11 3.500h5.500V9" fill="none" stroke="#e0e0e0" stroke-width="1.600"/></svg>
<div class="t" style="left:325.40000000000003px;top:1325.0px;font-size:15px;line-height:20px;color:#a4a4a4;transform:translateX(-50%);">12</div>
<div style="left:324.5px;top:1346px;width:1.4px;height:3px;background:#909090;"></div>
<div class="t" style="left:369.8px;top:1325.0px;font-size:15px;line-height:20px;color:#a4a4a4;transform:translateX(-50%);">14</div>
<div style="left:369.5px;top:1346px;width:1.4px;height:3px;background:#909090;"></div>
<div class="t" style="left:414.2px;top:1325.0px;font-size:15px;line-height:20px;color:#a4a4a4;transform:translateX(-50%);">16</div>
<div style="left:413.5px;top:1346px;width:1.4px;height:3px;background:#909090;"></div>
<div class="t" style="left:458.6px;top:1325.0px;font-size:15px;line-height:20px;color:#a4a4a4;transform:translateX(-50%);">18</div>
<div style="left:458.5px;top:1346px;width:1.4px;height:3px;background:#909090;"></div>
<div class="t" style="left:503.0px;top:1325.0px;font-size:15px;line-height:20px;color:#a4a4a4;transform:translateX(-50%);">20</div>
<div style="left:502.5px;top:1346px;width:1.4px;height:3px;background:#909090;"></div>
<div class="t" style="left:547.4px;top:1325.0px;font-size:15px;line-height:20px;color:#a4a4a4;transform:translateX(-50%);">22</div>
<div style="left:546.5px;top:1346px;width:1.4px;height:3px;background:#909090;"></div>
<div class="t" style="left:591.8px;top:1325.0px;font-size:15px;line-height:20px;color:#a4a4a4;transform:translateX(-50%);">24</div>
<div style="left:591.5px;top:1346px;width:1.4px;height:3px;background:#909090;"></div>
<div class="t" style="left:636.2px;top:1325.0px;font-size:15px;line-height:20px;color:#a4a4a4;transform:translateX(-50%);">26</div>
<div style="left:635.5px;top:1346px;width:1.4px;height:3px;background:#909090;"></div>
<div class="t" style="left:680.6px;top:1325.0px;font-size:15px;line-height:20px;color:#a4a4a4;transform:translateX(-50%);">28</div>
<div style="left:680.5px;top:1346px;width:1.4px;height:3px;background:#909090;"></div>
<div class="t" style="left:725.0px;top:1325.0px;font-size:15px;line-height:20px;color:#a4a4a4;transform:translateX(-50%);">30</div>
<div style="left:724.5px;top:1346px;width:1.4px;height:3px;background:#909090;"></div>
<div class="t" style="left:769.4px;top:1325.0px;font-size:15px;line-height:20px;color:#a4a4a4;transform:translateX(-50%);">32</div>
<div style="left:768.5px;top:1346px;width:1.4px;height:3px;background:#909090;"></div>
<div class="t" style="left:813.8px;top:1325.0px;font-size:15px;line-height:20px;color:#a4a4a4;transform:translateX(-50%);">34</div>
<div style="left:813.5px;top:1346px;width:1.4px;height:3px;background:#909090;"></div>
<div class="t" style="left:858.2px;top:1325.0px;font-size:15px;line-height:20px;color:#a4a4a4;transform:translateX(-50%);">36</div>
<div style="left:857.5px;top:1346px;width:1.4px;height:3px;background:#909090;"></div>
<div class="t" style="left:902.6px;top:1325.0px;font-size:15px;line-height:20px;color:#a4a4a4;transform:translateX(-50%);">38</div>
<div style="left:902.5px;top:1346px;width:1.4px;height:3px;background:#909090;"></div>
<div class="t" style="left:947.0px;top:1325.0px;font-size:15px;line-height:20px;color:#a4a4a4;transform:translateX(-50%);">40</div>
<div style="left:946.5px;top:1346px;width:1.4px;height:3px;background:#909090;"></div>
<div class="t" style="left:991.4px;top:1325.0px;font-size:15px;line-height:20px;color:#a4a4a4;transform:translateX(-50%);">42</div>
<div style="left:990.5px;top:1346px;width:1.4px;height:3px;background:#909090;"></div>
<div class="t" style="left:1035.8px;top:1325.0px;font-size:15px;line-height:20px;color:#a4a4a4;transform:translateX(-50%);">44</div>
<div style="left:1035.5px;top:1346px;width:1.4px;height:3px;background:#909090;"></div>
<div class="t" style="left:1080.2px;top:1325.0px;font-size:15px;line-height:20px;color:#a4a4a4;transform:translateX(-50%);">46</div>
<div style="left:1079.5px;top:1346px;width:1.4px;height:3px;background:#909090;"></div>
<div class="t" style="left:1124.6px;top:1325.0px;font-size:15px;line-height:20px;color:#a4a4a4;transform:translateX(-50%);">48</div>
<div style="left:1124.5px;top:1346px;width:1.4px;height:3px;background:#909090;"></div>
<div class="t" style="left:1169.0px;top:1325.0px;font-size:15px;line-height:20px;color:#a4a4a4;transform:translateX(-50%);">50</div>
<div style="left:1168.5px;top:1346px;width:1.4px;height:3px;background:#909090;"></div>
<div class="t" style="left:1213.4px;top:1325.0px;font-size:15px;line-height:20px;color:#a4a4a4;transform:translateX(-50%);">52</div>
<div style="left:1212.5px;top:1346px;width:1.4px;height:3px;background:#909090;"></div>
<div class="t" style="left:1257.8px;top:1325.0px;font-size:15px;line-height:20px;color:#a4a4a4;transform:translateX(-50%);">54</div>
<div style="left:1257.5px;top:1346px;width:1.4px;height:3px;background:#909090;"></div>
<div class="t" style="left:1302.1999999999998px;top:1325.0px;font-size:15px;line-height:20px;color:#a4a4a4;transform:translateX(-50%);">56</div>
<div style="left:1301.5px;top:1346px;width:1.4px;height:3px;background:#909090;"></div>
<div class="t" style="left:1346.6px;top:1325.0px;font-size:15px;line-height:20px;color:#a4a4a4;transform:translateX(-50%);">58</div>
<div style="left:1346.5px;top:1346px;width:1.4px;height:3px;background:#909090;"></div>
<div class="t" style="left:1391.0px;top:1325.0px;font-size:15px;line-height:20px;color:#a4a4a4;transform:translateX(-50%);">60</div>
<div style="left:1390.5px;top:1346px;width:1.4px;height:3px;background:#909090;"></div>
<div class="t" style="left:1435.4px;top:1325.0px;font-size:15px;line-height:20px;color:#a4a4a4;transform:translateX(-50%);">62</div>
<div style="left:1434.5px;top:1346px;width:1.4px;height:3px;background:#909090;"></div>
<div class="t" style="left:1479.8px;top:1325.0px;font-size:15px;line-height:20px;color:#a4a4a4;transform:translateX(-50%);">64</div>
<div style="left:1479.5px;top:1346px;width:1.4px;height:3px;background:#909090;"></div>
<div class="t" style="left:1524.1999999999998px;top:1325.0px;font-size:15px;line-height:20px;color:#a4a4a4;transform:translateX(-50%);">66</div>
<div style="left:1523.5px;top:1346px;width:1.4px;height:3px;background:#909090;"></div>
<div class="t" style="left:1568.6px;top:1325.0px;font-size:15px;line-height:20px;color:#a4a4a4;transform:translateX(-50%);">68</div>
<div style="left:1568.5px;top:1346px;width:1.4px;height:3px;background:#909090;"></div>
<div class="t" style="left:1613.0px;top:1325.0px;font-size:15px;line-height:20px;color:#a4a4a4;transform:translateX(-50%);">70</div>
<div style="left:1612.5px;top:1346px;width:1.4px;height:3px;background:#909090;"></div>
<div class="t" style="left:1657.4px;top:1325.0px;font-size:15px;line-height:20px;color:#a4a4a4;transform:translateX(-50%);">72</div>
<div style="left:1656.5px;top:1346px;width:1.4px;height:3px;background:#909090;"></div>
<div class="t" style="left:1701.8px;top:1325.0px;font-size:15px;line-height:20px;color:#a4a4a4;transform:translateX(-50%);">74</div>
<div style="left:1701.5px;top:1346px;width:1.4px;height:3px;background:#909090;"></div>
<div class="t" style="left:1746.1999999999998px;top:1325.0px;font-size:15px;line-height:20px;color:#a4a4a4;transform:translateX(-50%);">76</div>
<div style="left:1745.5px;top:1346px;width:1.4px;height:3px;background:#909090;"></div>
<div class="t" style="left:1790.6px;top:1325.0px;font-size:15px;line-height:20px;color:#a4a4a4;transform:translateX(-50%);">78</div>
<div style="left:1790.5px;top:1346px;width:1.4px;height:3px;background:#909090;"></div>
<div class="t" style="left:1835.0px;top:1325.0px;font-size:15px;line-height:20px;color:#a4a4a4;transform:translateX(-50%);">80</div>
<div style="left:1834.5px;top:1346px;width:1.4px;height:3px;background:#909090;"></div>
<div class="t" style="left:1879.3999999999999px;top:1325.0px;font-size:15px;line-height:20px;color:#a4a4a4;transform:translateX(-50%);">82</div>
<div style="left:1878.5px;top:1346px;width:1.4px;height:3px;background:#909090;"></div>
<div class="t" style="left:1923.8px;top:1325.0px;font-size:15px;line-height:20px;color:#a4a4a4;transform:translateX(-50%);">84</div>
<div style="left:1923.5px;top:1346px;width:1.4px;height:3px;background:#909090;"></div>
<div class="t" style="left:1968.2px;top:1325.0px;font-size:15px;line-height:20px;color:#a4a4a4;transform:translateX(-50%);">86</div>
<div style="left:1967.5px;top:1346px;width:1.4px;height:3px;background:#909090;"></div>
<div class="t" style="left:2012.6px;top:1325.0px;font-size:15px;line-height:20px;color:#a4a4a4;transform:translateX(-50%);">88</div>
<div style="left:2012.5px;top:1346px;width:1.4px;height:3px;background:#909090;"></div>
<div class="t" style="left:2057.0px;top:1325.0px;font-size:15px;line-height:20px;color:#a4a4a4;transform:translateX(-50%);">90</div>
<div style="left:2056.5px;top:1346px;width:1.4px;height:3px;background:#909090;"></div>
<div style="left:348px;top:1347px;width:1px;height:2px;background:#6a6a6a;"></div>
<div style="left:392px;top:1347px;width:1px;height:2px;background:#6a6a6a;"></div>
<div style="left:436px;top:1347px;width:1px;height:2px;background:#6a6a6a;"></div>
<div style="left:481px;top:1347px;width:1px;height:2px;background:#6a6a6a;"></div>
<div style="left:525px;top:1347px;width:1px;height:2px;background:#6a6a6a;"></div>
<div style="left:570px;top:1347px;width:1px;height:2px;background:#6a6a6a;"></div>
<div style="left:614px;top:1347px;width:1px;height:2px;background:#6a6a6a;"></div>
<div style="left:658px;top:1347px;width:1px;height:2px;background:#6a6a6a;"></div>
<div style="left:703px;top:1347px;width:1px;height:2px;background:#6a6a6a;"></div>
<div style="left:747px;top:1347px;width:1px;height:2px;background:#6a6a6a;"></div>
<div style="left:792px;top:1347px;width:1px;height:2px;background:#6a6a6a;"></div>
<div style="left:836px;top:1347px;width:1px;height:2px;background:#6a6a6a;"></div>
<div style="left:880px;top:1347px;width:1px;height:2px;background:#6a6a6a;"></div>
<div style="left:925px;top:1347px;width:1px;height:2px;background:#6a6a6a;"></div>
<div style="left:969px;top:1347px;width:1px;height:2px;background:#6a6a6a;"></div>
<div style="left:1014px;top:1347px;width:1px;height:2px;background:#6a6a6a;"></div>
<div style="left:1058px;top:1347px;width:1px;height:2px;background:#6a6a6a;"></div>
<div style="left:1102px;top:1347px;width:1px;height:2px;background:#6a6a6a;"></div>
<div style="left:1147px;top:1347px;width:1px;height:2px;background:#6a6a6a;"></div>
<div style="left:1191px;top:1347px;width:1px;height:2px;background:#6a6a6a;"></div>
<div style="left:1236px;top:1347px;width:1px;height:2px;background:#6a6a6a;"></div>
<div style="left:1280px;top:1347px;width:1px;height:2px;background:#6a6a6a;"></div>
<div style="left:1324px;top:1347px;width:1px;height:2px;background:#6a6a6a;"></div>
<div style="left:1369px;top:1347px;width:1px;height:2px;background:#6a6a6a;"></div>
<div style="left:1413px;top:1347px;width:1px;height:2px;background:#6a6a6a;"></div>
<div style="left:1458px;top:1347px;width:1px;height:2px;background:#6a6a6a;"></div>
<div style="left:1502px;top:1347px;width:1px;height:2px;background:#6a6a6a;"></div>
<div style="left:1546px;top:1347px;width:1px;height:2px;background:#6a6a6a;"></div>
<div style="left:1591px;top:1347px;width:1px;height:2px;background:#6a6a6a;"></div>
<div style="left:1635px;top:1347px;width:1px;height:2px;background:#6a6a6a;"></div>
<div style="left:1680px;top:1347px;width:1px;height:2px;background:#6a6a6a;"></div>
<div style="left:1724px;top:1347px;width:1px;height:2px;background:#6a6a6a;"></div>
<div style="left:1768px;top:1347px;width:1px;height:2px;background:#6a6a6a;"></div>
<div style="left:1813px;top:1347px;width:1px;height:2px;background:#6a6a6a;"></div>
<div style="left:1857px;top:1347px;width:1px;height:2px;background:#6a6a6a;"></div>
<div style="left:1902px;top:1347px;width:1px;height:2px;background:#6a6a6a;"></div>
<div style="left:1946px;top:1347px;width:1px;height:2px;background:#6a6a6a;"></div>
<div style="left:1990px;top:1347px;width:1px;height:2px;background:#6a6a6a;"></div>
<div style="left:2035px;top:1347px;width:1px;height:2px;background:#6a6a6a;"></div>
<div style="left:726px;top:1335px;width:1.5px;height:14px;background:#b0b0b0;"></div>
<div style="left:1392px;top:1335px;width:1.5px;height:14px;background:#b0b0b0;"></div>
<div style="left:2058px;top:1335px;width:1.5px;height:14px;background:#b0b0b0;"></div>
<div style="left:0px;top:1352px;width:1972px;height:21px;background:#3a3a3a;"></div>
<div class="t" style="left:1941px;top:1352.5px;font-size:14.5px;line-height:19px;color:#c0c0c0;transform:translateX(-50%);">90 F</div>
<div style="left:1984px;top:1352px;width:87px;height:21px;background:#1c1c1c;border-radius:2px;"></div>
<div class="t" style="left:2027px;top:1352.5px;font-size:14.5px;line-height:19px;color:#e0e0e0;transform:translateX(-50%);">90 F</div>
<div style="left:1690px;top:1310px;width:161px;height:29px;background:#ffffff;border-radius:4px;box-shadow:0 1px 3px rgba(0,0,0,.4);"></div>
<svg style="left:1668px;top:1305px;" width="38" height="38" viewBox="0 0 38 38"><path d="M4 6l27-4 4 27-27 7z" fill="#f0561c"/><path d="M27 11c-7-3-16-1-15 4s13 2 14 7-9 6-17 2" fill="none" stroke="#fff" stroke-width="4.5"/></svg>
<div class="t" style="left:1716px;top:1316.0px;font-size:14px;line-height:18px;color:#1a6fd8;transform:translateX(-50%);font-weight:bold;">英</div>
<svg style="left:1733px;top:1316px;" width="120" height="20" viewBox="0 0 120 20"><circle cx="3" cy="6" r="1.800" fill="#1a6fd8"/><path d="M9 8c2 0 2 3 0 5" stroke="#1a6fd8" stroke-width="1.800" fill="none"/><rect x="27" y="2" width="6" height="10" rx="3" fill="#1a6fd8"/><path d="M24.500 9a5.500 5.500 0 0 0 11 0M30 14.500v3" stroke="#1a6fd8" stroke-width="1.500" fill="none"/><rect x="46.500" y="4.500" width="15" height="11" rx="1.500" fill="none" stroke="#1a6fd8" stroke-width="1.500"/><path d="M49 8h10M49 10.500h10M50.500 13h7" stroke="#1a6fd8" stroke-width="1.300" stroke-dasharray="1.500 1"/><path d="M70 5l4-2c1 2 4 2 5 0l4 2-2 4-2-1v8h-7V8l-2 1z" fill="#9a58e8"/><circle cx="84" cy="3.500" r="2.800" fill="#f0483a"/><rect x="96" y="3" width="6" height="6" rx="1" fill="#1a6fd8"/><rect x="104" y="3" width="6" height="6" rx="3" fill="#1a6fd8"/><rect x="96" y="11" width="6" height="6" rx="1" fill="#1a6fd8"/><rect x="104" y="11" width="6" height="6" rx="1" fill="#1a6fd8"/></svg>
<svg style="left:0px;top:1318px;" width="2560" height="122" viewBox="0 0 2560 122"><polygon points="0,3 313,3 364,59 2560,59 2560,122 0,122" fill="#12131c"/><polygon points="0,1 314,1 366,58 363,59.500 312,3.500 0,3.500" fill="#25262b" opacity=".9"/></svg>
<svg style="left:8px;top:1372px;" width="60" height="60" viewBox="0 0 60 60"><rect x="3" y="4" width="52" height="53" rx="10" fill="#62646f" opacity=".85"/><circle cx="23" cy="30" r="10" fill="#16171f"/><circle cx="33" cy="19" r="5.500" fill="#16171f"/><circle cx="13" cy="32" r="2.500" fill="#16171f"/><path d="M27 25h20l-4 6h-5v16h-6V31h-5z" fill="#62646f"/></svg>
<div class="t" style="left:74px;top:1370.5px;font-size:49px;line-height:64px;color:rgba(84,87,102,.5);font-weight:bold;letter-spacing:3px;">tafe.cc</div>
<svg style="left:66px;top:1340px;" width="90" height="90" viewBox="0 0 90 90"><g transform="translate(45.600 45.300)"><path d="M-8.500 -25 L0 -42.500 L8.500 -25 Z" fill="#3fe2b4" transform="rotate(0)"/><path d="M-8.500 -25 L0 -42.500 L8.500 -25 Z" fill="#3fe2b4" transform="rotate(45)"/><path d="M-8.500 -25 L0 -42.500 L8.500 -25 Z" fill="#3fe2b4" transform="rotate(90)"/><path d="M-8.500 -25 L0 -42.500 L8.500 -25 Z" fill="#3fe2b4" transform="rotate(135)"/><path d="M-8.500 -25 L0 -42.500 L8.500 -25 Z" fill="#3fe2b4" transform="rotate(180)"/><path d="M-8.500 -25 L0 -42.500 L8.500 -25 Z" fill="#3fe2b4" transform="rotate(225)"/><path d="M-8.500 -25 L0 -42.500 L8.500 -25 Z" fill="#3fe2b4" transform="rotate(270)"/><path d="M-8.500 -25 L0 -42.500 L8.500 -25 Z" fill="#3fe2b4" transform="rotate(315)"/><circle r="24.800" fill="#3fe2b4"/><rect x="-11.300" y="-12.500" width="3.200" height="6.400" rx="1.400" fill="#12131c"/><rect x="-4.300" y="-12.500" width="3.200" height="6.400" rx="1.400" fill="#12131c"/><path d="M-12 10c7 5 20 3 27 -5" fill="none" stroke="#12131c" stroke-width="2.400" stroke-linecap="round"/><path d="M9 1c1 2 3 3 5 3" fill="none" stroke="#12131c" stroke-width="2.200" stroke-linecap="round"/></g></svg>
<div class="t" style="left:163px;top:1356.5px;font-size:32.5px;line-height:42px;color:#e4e4e6;transform:scaleY(1.13);transform-origin:left center;font-weight:bold;">曹大佐</div>
<div class="t" style="left:165px;top:1398.0px;font-size:11.7px;line-height:15px;color:#ececee;">SUNSHINE BASE</div>
<svg style="left:1192px;top:1395px;" width="30" height="30" viewBox="0 0 30 30"><circle cx="15" cy="15" r="13.500" fill="#e8eaf4"/><circle cx="16.500" cy="16" r="9.500" fill="#2a3270"/><circle cx="18" cy="14.500" r="6" fill="#4858b8"/><circle cx="19.500" cy="13" r="3" fill="#10143a"/></svg>
<div class="t" style="left:1221px;top:1389.5px;font-size:32px;line-height:42px;color:#ffffff;font-weight:bold;letter-spacing:-0.9px;word-spacing:7px;">INEMA 4D</div>
<div class="t" style="left:2061px;top:1395.5px;font-size:24px;line-height:31px;color:#ffffff;letter-spacing:3.6px;">所有课程内容仅代表</div>
<div class="t" style="left:2312px;top:1395.5px;font-size:24px;line-height:31px;color:#3fe2b4;letter-spacing:3.6px;">个人经验和观点</div>
<div style="left:687px;top:256px;width:786px;height:698px;background:#ffffff;box-shadow:0 0 0 1px #707070, 0 2px 9px rgba(0,0,0,.35);"></div>
<svg style="left:695px;top:263px;" width="15" height="15" viewBox="0 0 15 15"><circle cx="7.500" cy="7.500" r="7" fill="#1d2a5c"/><circle cx="8.500" cy="8" r="4.200" fill="#4a63b8"/><circle cx="9.500" cy="7" r="2" fill="#0c1030"/><path d="M1.500 10 A7 7 0 0 1 8 0.800" stroke="#c8cde0" stroke-width="1.800" fill="none"/></svg>
<div class="t" style="left:714px;top:262.0px;font-size:12.5px;line-height:16px;color:#000000;">加载文件</div>
<svg style="left:1450px;top:264px;" width="13" height="13" viewBox="0 0 13 13"><path d="M1 1l11 11M12 1L1 12" stroke="#222" stroke-width="1.200"/></svg>
<svg style="left:699px;top:294px;" width="90" height="16" viewBox="0 0 90 16"><path d="M2 8h13M8 2.500L2 8l6 5.500" fill="none" stroke="#5a5a5a" stroke-width="1.500"/><path d="M31 8h12M37.500 3l5.500 5-5.500 5" fill="none" stroke="#c8c8c8" stroke-width="1.500"/><path d="M57 6l3.500 3.500L64 6" fill="none" stroke="#6a6a6a" stroke-width="1.300"/><path d="M81 14V3M76 8l5-5 5 5" fill="none" stroke="#5a5a5a" stroke-width="1.500"/></svg>
<div style="left:792px;top:290px;width:443px;height:23px;background:#ffffff;border:1px solid #d9d9d9;"></div>
<div style="left:1234px;top:290px;width:21px;height:23px;background:#ffffff;border:1px solid #d9d9d9;"></div>
<svg style="left:797px;top:294px;" width="10" height="14" viewBox="0 0 10 14"><path d="M0 0h6l1 1.500h3V14H0z" fill="#f4bf3a"/><path d="M1.500 2h7v12h-7z" fill="#fde08a"/></svg>
<div class="t" style="left:817px;top:294.0px;font-size:11px;line-height:14px;color:#6a6a6a;">«</div>
<div class="t" style="left:830px;top:293.5px;font-size:12.5px;line-height:16px;color:#1a1a1a;">资料</div>
<svg style="left:860px;top:297px;" width="7" height="9" viewBox="0 0 7 9"><path d="M1.500 1l3.500 3.500L1.500 8" fill="none" stroke="#5a5a5a" stroke-width="1.300"/></svg>
<div class="t" style="left:874px;top:293.5px;font-size:12.5px;line-height:16px;color:#1a1a1a;">室内+户外共31个MR HDRI 完整包</div>
<svg style="left:1069px;top:297px;" width="7" height="9" viewBox="0 0 7 9"><path d="M1.500 1l3.500 3.500L1.500 8" fill="none" stroke="#5a5a5a" stroke-width="1.300"/></svg>
<svg style="left:1219px;top:298px;" width="11" height="8" viewBox="0 0 11 8"><path d="M1 1.500l4.500 4.500L10 1.500" fill="none" stroke="#444" stroke-width="1.500"/></svg>
<svg style="left:1238px;top:295px;" width="13" height="14" viewBox="0 0 13 14"><path d="M10.500 4A5 5 0 1 0 11.500 8" fill="none" stroke="#5a5a5a" stroke-width="1.500"/><path d="M7 1.500h4.500V6" fill="none" stroke="#5a5a5a" stroke-width="1.500"/></svg>
<div style="left:1262px;top:290px;width:203px;height:23px;background:#ffffff;border:1px solid #d9d9d9;"></div>
<div class="t" style="left:1269px;top:293.5px;font-size:12.5px;line-height:16px;color:#7a7a7a;">在 室内+户外共31个MR HDR...</div>
<svg style="left:1444px;top:295px;" width="13" height="13" viewBox="0 0 13 13"><circle cx="8" cy="5" r="3.800" fill="none" stroke="#5a5a5a" stroke-width="1.500"/><path d="M5.300 7.700L1 12" stroke="#5a5a5a" stroke-width="1.700"/></svg>
<div style="left:687px;top:320px;width:786px;height:32px;background:#f5f6f7;"></div>
<div class="t" style="left:706px;top:326.5px;font-size:12.5px;line-height:16px;color:#2a3b55;">组织</div>
<svg style="left:735px;top:333px;" width="7" height="5" viewBox="0 0 7 5"><path d="M0 0h6L3 3.500z" fill="#444"/></svg>
<div class="t" style="left:770px;top:326.5px;font-size:12.5px;line-height:16px;color:#2a3b55;">新建文件夹</div>
<svg style="left:1354px;top:328px;" width="16" height="14" viewBox="0 0 16 14"><path d="M1 1.500h2M1 5h2M1 8.500h2M1 12h2" stroke="#7a7a7a" stroke-width="1.600"/><path d="M5 1.500h9M5 5h9M5 8.500h9M5 12h9" stroke="#9a9a9a" stroke-width="1.300"/></svg>
<svg style="left:1378px;top:333px;" width="7" height="5" viewBox="0 0 7 5"><path d="M0 0h6L3 3.500z" fill="#444"/></svg>
<svg style="left:1406px;top:329px;" width="15" height="12" viewBox="0 0 15 12"><rect x="0.500" y="0.500" width="14" height="11" fill="#fff" stroke="#6a8ab0"/><rect x="8" y="1" width="6.500" height="10" fill="#3a8ee0"/></svg>
<svg style="left:1441px;top:327px;" width="16" height="16" viewBox="0 0 16 16"><circle cx="8" cy="8" r="8" fill="#0a63c9"/><path d="M5.500 6a2.600 2.600 0 1 1 3.500 2.500c-.8.400-1 .8-1 1.800" fill="none" stroke="#fff" stroke-width="1.700"/><circle cx="8" cy="12.600" r="1.100" fill="#fff"/></svg>
<div style="left:827px;top:352px;width:15px;height:521px;background:#f0f0f0;"></div>
<div style="left:827px;top:456px;width:15px;height:399px;background:#cdcdcd;"></div>
<svg style="left:830px;top:357px;" width="10" height="7" viewBox="0 0 10 7"><path d="M1 5.500l4-4 4 4" fill="none" stroke="#505050" stroke-width="1.700"/></svg>
<svg style="left:830px;top:861px;" width="10" height="7" viewBox="0 0 10 7"><path d="M1 1.500l4 4 4-4" fill="none" stroke="#505050" stroke-width="1.700"/></svg>
<div style="left:688px;top:736px;width:139px;height:24px;background:#d9d9d9;"></div>
<svg style="left:722px;top:356.5px;" width="10" height="14" viewBox="0 0 10 14"><path d="M0 0h6l1 1.500h3V14H0z" fill="#f4bf3a"/><path d="M1.500 2h7v12h-7z" fill="#fde08a"/></svg>
<div class="t" style="left:738px;top:355.5px;font-size:12.5px;line-height:16px;color:#000;width:88px;overflow:hidden;">录屏</div>
<svg style="left:722px;top:380.5px;" width="10" height="14" viewBox="0 0 10 14"><path d="M0 0h6l1 1.500h3V14H0z" fill="#f4bf3a"/><path d="M1.500 2h7v12h-7z" fill="#fde08a"/></svg>
<div class="t" style="left:738px;top:379.5px;font-size:12.5px;line-height:16px;color:#000;width:88px;overflow:hidden;">录屏</div>
<svg style="left:722px;top:404.5px;" width="10" height="14" viewBox="0 0 10 14"><path d="M0 0h6l1 1.500h3V14H0z" fill="#f4bf3a"/><path d="M1.500 2h7v12h-7z" fill="#fde08a"/></svg>
<div class="t" style="left:738px;top:403.5px;font-size:12.5px;line-height:16px;color:#000;width:88px;overflow:hidden;">室内+户外共31个</div>
<svg style="left:722px;top:428.5px;" width="10" height="14" viewBox="0 0 10 14"><path d="M0 0h6l1 1.500h3V14H0z" fill="#f4bf3a"/><path d="M1.500 2h7v12h-7z" fill="#fde08a"/></svg>
<div class="t" style="left:738px;top:427.5px;font-size:12.5px;line-height:16px;color:#000;width:88px;overflow:hidden;">渲染</div>
<svg style="left:711px;top:460px;" width="17" height="14" viewBox="0 0 17 14"><path d="M4 11a3.500 3.500 0 0 1 .500-7 5 5 0 0 1 9 1 3 3 0 0 1 0 6z" fill="#2a9df4"/></svg>
<div class="t" style="left:730px;top:459.5px;font-size:12.5px;line-height:16px;color:#000;">WPS云盘</div>
<svg style="left:711px;top:492px;" width="17" height="14" viewBox="0 0 17 14"><path d="M4 11a3.500 3.500 0 0 1 .500-7 5 5 0 0 1 9 1 3 3 0 0 1 0 6z" fill="#1a78d8"/></svg>
<div class="t" style="left:730px;top:491.5px;font-size:12.5px;line-height:16px;color:#000;">OneDrive</div>
<svg style="left:711px;top:523px;" width="18" height="16" viewBox="0 0 18 16"><rect x="3" y="1" width="12" height="9" fill="#3aa0e8" transform="rotate(8 9 5)"/><path d="M2 13l8-2 6 2-8 2z" fill="#a8b8c8"/></svg>
<div class="t" style="left:730px;top:523.5px;font-size:12.5px;line-height:16px;color:#000;">此电脑</div>
<svg style="left:720px;top:548px;" width="15" height="15" viewBox="0 0 15 15"><path d="M7.500 1l6 2.500v8l-6 2.500-6-2.500v-8z" fill="#38b4e8"/><path d="M7.500 6v8l-6-2.500v-8z" fill="#7ad4f4"/><path d="M7.500 1l6 2.500-6 2.500-6-2.500z" fill="#b8ecff"/></svg>
<div class="t" style="left:738px;top:547.5px;font-size:12.5px;line-height:16px;color:#000;">3D 对象</div>
<svg style="left:720px;top:572px;" width="15" height="15" viewBox="0 0 15 15"><rect x="1" y="1" width="13" height="13" fill="#2a3a6a"/><rect x="3.500" y="2" width="8" height="11" fill="#4a5aa8"/><rect x="3.500" y="6" width="8" height="4" fill="#c0a060"/><path d="M2 2v12M13 2v12" stroke="#222" stroke-width="1.400" stroke-dasharray="1.500 1.500"/></svg>
<div class="t" style="left:738px;top:571.5px;font-size:12.5px;line-height:16px;color:#000;">视频</div>
<svg style="left:720px;top:597px;" width="16" height="13" viewBox="0 0 16 13"><rect x="0.500" y="0.500" width="15" height="11" fill="#e8f0f8" stroke="#8a9ab0"/><path d="M1 9l4-4 4 3 3-2 3 3v2H1z" fill="#4a90c8"/></svg>
<div class="t" style="left:738px;top:595.5px;font-size:12.5px;line-height:16px;color:#000;">图片</div>
<svg style="left:721px;top:620px;" width="13" height="15" viewBox="0 0 13 15"><path d="M1 .500h8l3 3v11H1z" fill="#fff" stroke="#8a9ab0"/><path d="M3.500 5h6M3.500 7.500h6M3.500 10h6" stroke="#4a90c8" stroke-width="1.200"/></svg>
<div class="t" style="left:738px;top:619.5px;font-size:12.5px;line-height:16px;color:#000;">文档</div>
<svg style="left:721px;top:644px;" width="14" height="15" viewBox="0 0 14 15"><path d="M4.500 1h5v6h3.500L7 14 1 7h3.500z" fill="#2a8ae0"/></svg>
<div class="t" style="left:738px;top:643.5px;font-size:12.5px;line-height:16px;color:#000;">下载</div>
<svg style="left:721px;top:668px;" width="14" height="15" viewBox="0 0 14 15"><path d="M6 1v9.500a3 3 0 1 1-1.500-2.600V1z" fill="#2a8ae0"/><path d="M6 1c2 2 5 2 5 6" fill="none" stroke="#2a8ae0" stroke-width="1.800"/></svg>
<div class="t" style="left:738px;top:667.5px;font-size:12.5px;line-height:16px;color:#000;">音乐</div>
<svg style="left:720px;top:693px;" width="16" height="13" viewBox="0 0 16 13"><rect x="0" y="0" width="16" height="12" fill="#1a8ae8"/></svg>
<div class="t" style="left:738px;top:691.5px;font-size:12.5px;line-height:16px;color:#000;">桌面</div>
<svg style="left:720px;top:716px;" width="17" height="15" viewBox="0 0 17 15"><path d="M1 8l10-3 5 2-10 4z" fill="#ececec" stroke="#b0b0b0" stroke-width=".5"/><path d="M1 8l5 3v2l-5-3z" fill="#555"/><path d="M6 11l10-4v2l-10 4z" fill="#999"/><path d="M1 1h3v3H1zM5 1h3v3H5zM1 5h3v2H1zM5 5h3v2H5z" fill="#2a8ae0"/></svg>
<div class="t" style="left:738px;top:715.5px;font-size:12.5px;line-height:16px;color:#000;">本地磁盘 (C:)</div>
<svg style="left:720px;top:740px;" width="17" height="15" viewBox="0 0 17 15"><path d="M1 8l10-3 5 2-10 4z" fill="#ececec" stroke="#b0b0b0" stroke-width=".5"/><path d="M1 8l5 3v2l-5-3z" fill="#555"/><path d="M6 11l10-4v2l-10 4z" fill="#999"/></svg>
<div class="t" style="left:738px;top:739.5px;font-size:12.5px;line-height:16px;color:#000;">新加卷 (D:)</div>
<svg style="left:720px;top:764px;" width="17" height="15" viewBox="0 0 17 15"><path d="M1 8l10-3 5 2-10 4z" fill="#ececec" stroke="#b0b0b0" stroke-width=".5"/><path d="M1 8l5 3v2l-5-3z" fill="#555"/><path d="M6 11l10-4v2l-10 4z" fill="#999"/></svg>
<div class="t" style="left:738px;top:763.5px;font-size:12.5px;line-height:16px;color:#000;width:88px;overflow:hidden;">曹大佐滴硬盘 (E:)</div>
<svg style="left:711px;top:796px;" width="17" height="15" viewBox="0 0 17 15"><path d="M1 8l10-3 5 2-10 4z" fill="#ececec" stroke="#b0b0b0" stroke-width=".5"/><path d="M1 8l5 3v2l-5-3z" fill="#555"/><path d="M6 11l10-4v2l-10 4z" fill="#999"/></svg>
<div class="t" style="left:730px;top:795.5px;font-size:12.5px;line-height:16px;color:#000;letter-spacing:-0.3px;">曹大佐滴硬盘 (E:)</div>
<svg style="left:711px;top:827px;" width="17" height="16" viewBox="0 0 17 16"><path d="M3 6l6-3 5 3v6l-6 3-5-3z" fill="#38a0e0"/><path d="M9 3l5 3-5 3-6-3z" fill="#7ac8f4"/><path d="M1 10l5 4" stroke="#58b0e8" stroke-width="2"/></svg>
<div class="t" style="left:730px;top:827.5px;font-size:12.5px;line-height:16px;color:#000;">网络</div>
<div style="left:1152px;top:353px;width:1px;height:24px;background:#e8e8e8;"></div>
<div style="left:1314px;top:353px;width:1px;height:24px;background:#e8e8e8;"></div>
<div style="left:1450px;top:353px;width:1px;height:24px;background:#e8e8e8;"></div>
<svg style="left:1001px;top:352px;" width="9" height="6" viewBox="0 0 9 6"><path d="M1 5l3.500-3.500L8 5" fill="none" stroke="#8a8a8a" stroke-width="1"/></svg>
<div class="t" style="left:864px;top:357.0px;font-size:12.5px;line-height:16px;color:#4c607a;max-width:608px;overflow:hidden;">名称</div>
<div class="t" style="left:1159px;top:357.0px;font-size:12.5px;line-height:16px;color:#4c607a;max-width:313px;overflow:hidden;">修改日期</div>
<div class="t" style="left:1321px;top:357.0px;font-size:12.5px;line-height:16px;color:#4c607a;max-width:151px;overflow:hidden;">类型</div>
<div class="t" style="left:1456px;top:357.0px;font-size:12.5px;line-height:16px;color:#4c607a;max-width:16px;overflow:hidden;">大小</div>
<svg style="left:867px;top:387.5px;" width="10" height="14" viewBox="0 0 10 14"><path d="M0 0h6l1 1.500h3V14H0z" fill="#f4bf3a"/><path d="M1.500 2h7v12h-7z" fill="#fde08a"/></svg>
<div class="t" style="left:885px;top:386.5px;font-size:12.5px;line-height:16px;color:#000;">户外HDR文件_15个</div>
<div class="t" style="left:1159px;top:386.5px;font-size:12.5px;line-height:16px;color:#6d6d6d;letter-spacing:0.5px;">2024/10/31 15:58</div>
<div class="t" style="left:1321px;top:386.5px;font-size:12.5px;line-height:16px;color:#6d6d6d;">文件夹</div>
<svg style="left:867px;top:408px;" width="10" height="14" viewBox="0 0 10 14"><path d="M0 0h6l1 1.500h3V14H0z" fill="#f4bf3a"/><path d="M1.500 2h7v12h-7z" fill="#fde08a"/></svg>
<div class="t" style="left:885px;top:407.0px;font-size:12.5px;line-height:16px;color:#000;">户外-预览图</div>
<div class="t" style="left:1159px;top:407.0px;font-size:12.5px;line-height:16px;color:#6d6d6d;letter-spacing:0.5px;">2024/10/31 15:53</div>
<div class="t" style="left:1321px;top:407.0px;font-size:12.5px;line-height:16px;color:#6d6d6d;">文件夹</div>
<svg style="left:867px;top:428.5px;" width="10" height="14" viewBox="0 0 10 14"><path d="M0 0h6l1 1.500h3V14H0z" fill="#f4bf3a"/><path d="M1.500 2h7v12h-7z" fill="#fde08a"/></svg>
<div class="t" style="left:885px;top:427.5px;font-size:12.5px;line-height:16px;color:#000;">室内HDR文件_16个</div>
<div class="t" style="left:1159px;top:427.5px;font-size:12.5px;line-height:16px;color:#6d6d6d;letter-spacing:0.5px;">2024/10/31 15:57</div>
<div class="t" style="left:1321px;top:427.5px;font-size:12.5px;line-height:16px;color:#6d6d6d;">文件夹</div>
<svg style="left:867px;top:449.5px;" width="10" height="14" viewBox="0 0 10 14"><path d="M0 0h6l1 1.500h3V14H0z" fill="#f4bf3a"/><path d="M1.500 2h7v12h-7z" fill="#fde08a"/></svg>
<div class="t" style="left:885px;top:448.5px;font-size:12.5px;line-height:16px;color:#000;">室内-预览图</div>
<div class="t" style="left:1159px;top:448.5px;font-size:12.5px;line-height:16px;color:#6d6d6d;letter-spacing:0.5px;">2024/10/31 15:53</div>
<div class="t" style="left:1321px;top:448.5px;font-size:12.5px;line-height:16px;color:#6d6d6d;">文件夹</div>
<div style="left:848px;top:856px;width:624px;height:17px;background:#f0f0f0;"></div>
<div style="left:865px;top:856px;width:525px;height:17px;background:#cdcdcd;"></div>
<svg style="left:852px;top:860px;" width="7" height="10" viewBox="0 0 7 10"><path d="M5.500 1l-4 4 4 4" fill="none" stroke="#505050" stroke-width="1.700"/></svg>
<svg style="left:1460px;top:860px;" width="7" height="10" viewBox="0 0 7 10"><path d="M1.500 1l4 4-4 4" fill="none" stroke="#505050" stroke-width="1.700"/></svg>
<div style="left:687px;top:873px;width:786px;height:81px;background:#f0f0f0;"></div>
<div class="t" style="left:823px;top:891.5px;font-size:12.5px;line-height:16px;color:#000;">文件名(N):</div>
<div style="left:885px;top:889px;width:370px;height:22px;background:#fff;border:1px solid #7a7a7a;"></div>
<div class="t" style="left:889px;top:891.5px;font-size:12.5px;line-height:16px;color:#000;">env</div>
<svg style="left:1241px;top:897px;" width="9" height="6" viewBox="0 0 9 6"><path d="M1 1l3.500 3.500L8 1" fill="none" stroke="#444" stroke-width="1.100"/></svg>
<div style="left:1266px;top:889px;width:189px;height:22px;background:#e4e4e4;border:1px solid #adadad;"></div>
<div class="t" style="left:1270px;top:891.5px;font-size:12.5px;line-height:16px;color:#000;">全部文件</div>
<svg style="left:1441px;top:897px;" width="9" height="6" viewBox="0 0 9 6"><path d="M1 1l3.500 3.500L8 1" fill="none" stroke="#444" stroke-width="1.100"/></svg>
<div style="left:1267px;top:917px;width:87px;height:24px;background:#e4e8ec;border:2px solid #0078d7;"></div>
<div class="t" style="left:1303px;top:921.0px;font-size:12.5px;line-height:16px;color:#000;transform:translateX(-50%);">打开(O)</div>
<div style="left:1339px;top:920px;width:1px;height:18px;background:#555;"></div>
<svg style="left:1342px;top:926px;" width="9" height="6" viewBox="0 0 9 6"><path d="M0 0h9L4.500 5.500z" fill="#111"/></svg>
<div style="left:1367px;top:917px;width:87px;height:24px;background:#e1e1e1;border:1px solid #adadad;"></div>
<div class="t" style="left:1410px;top:921.0px;font-size:12.5px;line-height:16px;color:#000;transform:translateX(-50%);">取消</div>
<svg style="left:1461px;top:942px;" width="10" height="10" viewBox="0 0 10 10"><path d="M8 2h1v1H8zM8 5h1v1H8zM5 5h1v1H5zM8 8h1v1H8zM5 8h1v1H5zM2 8h1v1H2z" fill="#a0a0a0"/></svg>
<svg style="left:1075px;top:676px;" width="14" height="21" viewBox="0 0 14 21"><path d="M1 1v15.500l3.600-3.400 2.600 6 2.400-1-2.600-5.900h5z" fill="#fff" stroke="#111" stroke-width="1"/></svg></div></body></html>
